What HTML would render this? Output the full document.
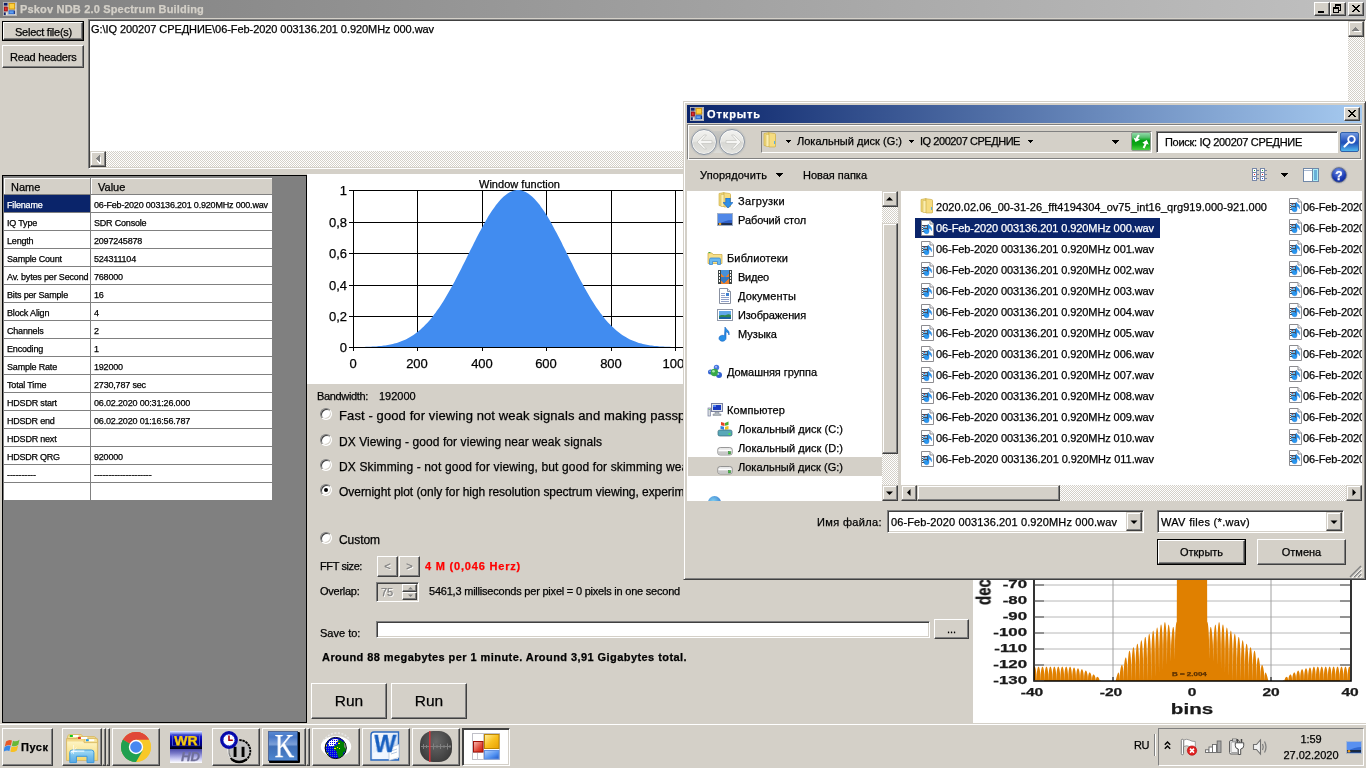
<!DOCTYPE html>
<html><head><meta charset="utf-8"><title>Pskov NDB</title>
<style>
*{box-sizing:border-box;margin:0;padding:0}
html,body{width:1366px;height:768px;overflow:hidden;background:#d4d0c8;font-family:"Liberation Sans",sans-serif;font-size:11px;color:#000}
.abs{position:absolute}
.t{position:absolute;white-space:nowrap;line-height:1;will-change:transform;-webkit-text-stroke:.25px}
.btn{position:absolute;background:#d4d0c8;border:1px solid;border-color:#fff #404040 #404040 #fff;box-shadow:inset -1px -1px 0 #808080,inset 1px 1px 0 #d4d0c8}
.sbtn{position:absolute;background:#d4d0c8;border:1px solid;border-color:#d4d0c8 #404040 #404040 #d4d0c8;box-shadow:inset -1px -1px 0 #808080,inset 1px 1px 0 #fff}
.sunk{position:absolute;background:#fff;border:1px solid;border-color:#808080 #fff #fff #808080;box-shadow:inset 1px 1px 0 #404040,inset -1px -1px 0 #d4d0c8}
.chk{background-color:#fff;background-image:linear-gradient(45deg,#d4d0c8 25%,transparent 25%,transparent 75%,#d4d0c8 75%),linear-gradient(45deg,#d4d0c8 25%,transparent 25%,transparent 75%,#d4d0c8 75%);background-size:2px 2px;background-position:0 0,1px 1px}
</style></head><body>

<div class="abs" style="left:0;top:0;width:1366px;height:18px;background:linear-gradient(90deg,#808080,#c0c0c0)"></div>
<div class="t" style="left:20px;top:3.69px;font-size:11px;font-weight:bold;color:#d4d0c8;letter-spacing:0.178px;">Pskov NDB 2.0 Spectrum Building</div>
<svg class="abs" style="left:3px;top:2px" width="14" height="14" viewBox="0 0 15 15">
<rect x=".5" y=".5" width="14" height="14" fill="none" stroke="#b8b8b8"/>
<rect x="1" y="1" width="4" height="3" fill="#10206a"/><rect x="1" y="11" width="2" height="3" fill="#10206a"/><rect x="3" y="11" width="2" height="3" fill="#e8e8e8"/><rect x="12" y="9" width="1" height="4" fill="#10206a"/>
<rect x="1" y="4" width="13" height="1" fill="#e0e0e0"/><rect x="5" y="1" width="1" height="13" fill="#e0e0e0"/><rect x="1" y="10" width="4" height="1" fill="#e0e0e0"/><rect x="13" y="1" width="1" height="13" fill="#d8d8d8"/><rect x="6" y="8" width="8" height="1" fill="#e0e0e0"/><rect x="6" y="13" width="8" height="1" fill="#d8d8d8"/>
<rect x="6.5" y="1.5" width="6" height="6" fill="#fcd040" stroke="#d89808"/>
<rect x="1.5" y="5.500" width="3" height="4" fill="#e03030" stroke="#a81010"/>
<rect x="6.5" y="9.500" width="5" height="3" fill="#60a0f0" stroke="#3070d8"/>
</svg>
<div class="btn" style="left:1314px;top:2px;width:16px;height:14px"></div>
<div class="btn" style="left:1330px;top:2px;width:16px;height:14px"></div>
<div class="btn" style="left:1348px;top:2px;width:16px;height:14px"></div>
<div class="abs" style="left:1318px;top:11px;width:6px;height:2px;background:#000"></div>
<svg class="abs" style="left:1330px;top:2px" width="16" height="14" viewBox="0 0 16 14" shape-rendering="crispEdges"><rect x="5" y="2" width="6" height="2" fill="#000"/><path d="M10.5 4v4.5h-1.5M5.5 4v1" fill="none" stroke="#000"/><rect x="3" y="5" width="6" height="2" fill="#000"/><path d="M3.5 7v3.5h5V7" fill="none" stroke="#000"/></svg>
<svg class="abs" style="left:1352px;top:5px" width="8" height="7" viewBox="0 0 8 7" shape-rendering="crispEdges"><path d="M0 0h2v1h1v1h2v-1h1v-1h2v1h-1v1h-1v1h-1v1h1v1h1v1h1v1h-2v-1h-1v-1h-2v1h-1v1h-2v-1h1v-1h1v-1h1v-1h-1v-1h-1v-1h-1z" fill="#000"/></svg>
<div class="abs" style="left:0;top:18px;width:1366px;height:1px;background:#d4d0c8"></div>
<div class="abs" style="left:2px;top:21px;width:82px;height:20px;border:1px solid #000"></div>
<div class="btn" style="left:3px;top:22px;width:80px;height:18px"></div>
<div class="t" style="left:14.5px;top:26.69px;font-size:11px;letter-spacing:-0.251px;">Select file(s)</div>
<div class="btn" style="left:2px;top:45px;width:82px;height:23px"></div>
<div class="t" style="left:9.5px;top:51.69px;font-size:11px;letter-spacing:-0.217px;">Read headers</div>
<div class="sunk" style="left:88px;top:19px;width:1278px;height:150px"></div>
<div class="t" style="left:91px;top:23.69px;font-size:11px;letter-spacing:-0.063px;">G:\IQ 200207 СРЕДНИЕ\06-Feb-2020 003136.201 0.920MHz 000.wav</div>
<div class="abs chk" style="left:90px;top:151px;width:1258px;height:16px"></div>
<div class="sbtn" style="left:90px;top:151px;width:16px;height:16px"></div>
<svg class="abs" style="left:95px;top:155px" width="6" height="9" viewBox="0 0 6 9" shape-rendering="crispEdges"><path d="M5 1h1v7h-1zM4 2h1v6h-1zM3 3h1v4h-1zM2 4h1v2h-1z" fill="#fff" transform="translate(0,1)"/><path d="M4 0h1v7h-1zM3 1h1v5h-1zM2 2h1v3h-1zM1 3h1v1h-1z" fill="#808080"/></svg>
<div class="abs chk" style="left:1348px;top:21px;width:16px;height:130px"></div>
<div class="sbtn" style="left:1348px;top:21px;width:16px;height:16px"></div>
<svg class="abs" style="left:1352px;top:27px" width="9" height="6" viewBox="0 0 9 6" shape-rendering="crispEdges"><path d="M1 4h7v1h-7z" fill="#fff" transform="translate(1,0)"/><path d="M3 0h1v1h-1zM2 1h3v1h-3zM1 2h5v1h-5zM0 3h7v1h-7z" fill="#808080"/></svg>
<div class="abs" style="left:2px;top:175px;width:305px;height:548px;background:#808080;border:1px solid #000"></div>
<div class="abs" style="left:4px;top:178px;width:87px;height:17px;background:#d4d0c8;border-right:1px solid #808080;border-bottom:1px solid #808080;box-shadow:inset 1px 1px 0 #fff"></div>
<div class="abs" style="left:91px;top:178px;width:182px;height:17px;background:#d4d0c8;border-right:1px solid #808080;border-bottom:1px solid #808080;box-shadow:inset 1px 1px 0 #fff"></div>
<div class="t" style="left:10.5px;top:181.69px;font-size:11px;">Name</div>
<div class="t" style="left:97.5px;top:181.69px;font-size:11px;">Value</div>
<div class="abs" style="left:4px;top:195px;width:86px;height:17px;background:#0a246a"></div>
<div class="abs" style="left:91px;top:195px;width:181px;height:17px;background:#fff"></div>
<div class="t" style="left:6.5px;top:201.08px;font-size:9px;color:#fff;letter-spacing:-0.185px;">Filename</div>
<div class="t" style="left:93.5px;top:201.08px;font-size:9px;letter-spacing:-0.186px;">06-Feb-2020 003136.201 0.920MHz 000.wav</div>
<div class="abs" style="left:4px;top:213px;width:86px;height:17px;background:#fff"></div>
<div class="abs" style="left:91px;top:213px;width:181px;height:17px;background:#fff"></div>
<div class="t" style="left:6.5px;top:219.08px;font-size:9px;letter-spacing:-0.179px;">IQ Type</div>
<div class="t" style="left:93.5px;top:219.08px;font-size:9px;letter-spacing:-0.198px;">SDR Console</div>
<div class="abs" style="left:4px;top:231px;width:86px;height:17px;background:#fff"></div>
<div class="abs" style="left:91px;top:231px;width:181px;height:17px;background:#fff"></div>
<div class="t" style="left:6.5px;top:237.08px;font-size:9px;letter-spacing:-0.184px;">Length</div>
<div class="t" style="left:93.5px;top:237.08px;font-size:9px;letter-spacing:-0.200px;">2097245878</div>
<div class="abs" style="left:4px;top:249px;width:86px;height:17px;background:#fff"></div>
<div class="abs" style="left:91px;top:249px;width:181px;height:17px;background:#fff"></div>
<div class="t" style="left:6.5px;top:255.08px;font-size:9px;letter-spacing:-0.190px;">Sample Count</div>
<div class="t" style="left:93.5px;top:255.08px;font-size:9px;letter-spacing:-0.194px;">524311104</div>
<div class="abs" style="left:4px;top:267px;width:86px;height:17px;background:#fff"></div>
<div class="abs" style="left:91px;top:267px;width:181px;height:17px;background:#fff"></div>
<div class="t" style="left:6.5px;top:273.08px;font-size:9px;letter-spacing:-0.169px;">Av. bytes per Second</div>
<div class="t" style="left:93.5px;top:273.08px;font-size:9px;letter-spacing:-0.200px;">768000</div>
<div class="abs" style="left:4px;top:285px;width:86px;height:17px;background:#fff"></div>
<div class="abs" style="left:91px;top:285px;width:181px;height:17px;background:#fff"></div>
<div class="t" style="left:6.5px;top:291.08px;font-size:9px;letter-spacing:-0.169px;">Bits per Sample</div>
<div class="t" style="left:93.5px;top:291.08px;font-size:9px;letter-spacing:-0.200px;">16</div>
<div class="abs" style="left:4px;top:303px;width:86px;height:17px;background:#fff"></div>
<div class="abs" style="left:91px;top:303px;width:181px;height:17px;background:#fff"></div>
<div class="t" style="left:6.5px;top:309.08px;font-size:9px;letter-spacing:-0.160px;">Block Align</div>
<div class="t" style="left:93.5px;top:309.08px;font-size:9px;">4</div>
<div class="abs" style="left:4px;top:321px;width:86px;height:17px;background:#fff"></div>
<div class="abs" style="left:91px;top:321px;width:181px;height:17px;background:#fff"></div>
<div class="t" style="left:6.5px;top:327.08px;font-size:9px;letter-spacing:-0.190px;">Channels</div>
<div class="t" style="left:93.5px;top:327.08px;font-size:9px;">2</div>
<div class="abs" style="left:4px;top:339px;width:86px;height:17px;background:#fff"></div>
<div class="abs" style="left:91px;top:339px;width:181px;height:17px;background:#fff"></div>
<div class="t" style="left:6.5px;top:345.08px;font-size:9px;letter-spacing:-0.188px;">Encoding</div>
<div class="t" style="left:93.5px;top:345.08px;font-size:9px;">1</div>
<div class="abs" style="left:4px;top:357px;width:86px;height:17px;background:#fff"></div>
<div class="abs" style="left:91px;top:357px;width:181px;height:17px;background:#fff"></div>
<div class="t" style="left:6.5px;top:363.08px;font-size:9px;letter-spacing:-0.189px;">Sample Rate</div>
<div class="t" style="left:93.5px;top:363.08px;font-size:9px;letter-spacing:-0.200px;">192000</div>
<div class="abs" style="left:4px;top:375px;width:86px;height:17px;background:#fff"></div>
<div class="abs" style="left:91px;top:375px;width:181px;height:17px;background:#fff"></div>
<div class="t" style="left:6.5px;top:381.08px;font-size:9px;letter-spacing:-0.164px;">Total Time</div>
<div class="t" style="left:93.5px;top:381.08px;font-size:9px;letter-spacing:-0.180px;">2730,787 sec</div>
<div class="abs" style="left:4px;top:393px;width:86px;height:17px;background:#fff"></div>
<div class="abs" style="left:91px;top:393px;width:181px;height:17px;background:#fff"></div>
<div class="t" style="left:6.5px;top:399.08px;font-size:9px;letter-spacing:-0.189px;">HDSDR start</div>
<div class="t" style="left:93.5px;top:399.08px;font-size:9px;letter-spacing:-0.174px;">06.02.2020 00:31:26.000</div>
<div class="abs" style="left:4px;top:411px;width:86px;height:17px;background:#fff"></div>
<div class="abs" style="left:91px;top:411px;width:181px;height:17px;background:#fff"></div>
<div class="t" style="left:6.5px;top:417.08px;font-size:9px;letter-spacing:-0.220px;">HDSDR end</div>
<div class="t" style="left:93.5px;top:417.08px;font-size:9px;letter-spacing:-0.174px;">06.02.2020 01:16:56.787</div>
<div class="abs" style="left:4px;top:429px;width:86px;height:17px;background:#fff"></div>
<div class="abs" style="left:91px;top:429px;width:181px;height:17px;background:#fff"></div>
<div class="t" style="left:6.5px;top:435.08px;font-size:9px;letter-spacing:-0.206px;">HDSDR next</div>
<div class="abs" style="left:4px;top:447px;width:86px;height:17px;background:#fff"></div>
<div class="abs" style="left:91px;top:447px;width:181px;height:17px;background:#fff"></div>
<div class="t" style="left:6.5px;top:453.08px;font-size:9px;letter-spacing:-0.244px;">HDSDR QRG</div>
<div class="t" style="left:93.5px;top:453.08px;font-size:9px;letter-spacing:-0.200px;">920000</div>
<div class="abs" style="left:4px;top:465px;width:86px;height:17px;background:#fff"></div>
<div class="abs" style="left:91px;top:465px;width:181px;height:17px;background:#fff"></div>
<div class="t" style="left:6.5px;top:471.08px;font-size:9px;letter-spacing:-0.120px;">----------</div>
<div class="t" style="left:93.5px;top:471.08px;font-size:9px;letter-spacing:-0.120px;">--------------------</div>
<div class="abs" style="left:4px;top:483px;width:86px;height:17px;background:#fff"></div>
<div class="abs" style="left:91px;top:483px;width:181px;height:17px;background:#fff"></div>
<div class="abs" style="left:307px;top:174px;width:400px;height:210px;background:#fff"></div>
<svg class="abs" style="left:307px;top:175px" width="400" height="208" viewBox="307 175 400 208"><path d="M349 347.5H700" stroke="#000" stroke-width="1" shape-rendering="crispEdges"/><path d="M349 316.5H700" stroke="#000" stroke-width="1" shape-rendering="crispEdges"/><path d="M349 285.5H700" stroke="#000" stroke-width="1" shape-rendering="crispEdges"/><path d="M349 253.5H700" stroke="#000" stroke-width="1" shape-rendering="crispEdges"/><path d="M349 222.5H700" stroke="#000" stroke-width="1" shape-rendering="crispEdges"/><path d="M349 190.5H700" stroke="#000" stroke-width="1" shape-rendering="crispEdges"/><path d="M353.5 190V351" stroke="#000" stroke-width="1" shape-rendering="crispEdges"/><path d="M417.5 190V351" stroke="#000" stroke-width="1" shape-rendering="crispEdges"/><path d="M482.5 190V351" stroke="#000" stroke-width="1" shape-rendering="crispEdges"/><path d="M546.5 190V351" stroke="#000" stroke-width="1" shape-rendering="crispEdges"/><path d="M611.5 190V351" stroke="#000" stroke-width="1" shape-rendering="crispEdges"/><path d="M675.5 190V351" stroke="#000" stroke-width="1" shape-rendering="crispEdges"/><polygon points="353,347.5 353.0,347.0 354.3,347.0 355.6,347.0 356.9,347.0 358.2,347.0 359.4,347.0 360.7,346.9 362.0,346.9 363.3,346.9 364.6,346.9 365.9,346.8 367.2,346.8 368.5,346.8 369.7,346.7 371.0,346.7 372.3,346.6 373.6,346.5 374.9,346.4 376.2,346.4 377.5,346.3 378.8,346.1 380.0,346.0 381.3,345.9 382.6,345.7 383.9,345.6 385.2,345.4 386.5,345.2 387.8,345.0 389.1,344.7 390.4,344.5 391.6,344.2 392.9,343.9 394.2,343.6 395.5,343.2 396.8,342.9 398.1,342.5 399.4,342.0 400.7,341.6 401.9,341.1 403.2,340.5 404.5,340.0 405.8,339.4 407.1,338.7 408.4,338.0 409.7,337.3 411.0,336.6 412.2,335.7 413.5,334.9 414.8,334.0 416.1,333.1 417.4,332.1 418.7,331.0 420.0,330.0 421.3,328.8 422.6,327.6 423.8,326.4 425.1,325.1 426.4,323.8 427.7,322.4 429.0,320.9 430.3,319.4 431.6,317.9 432.9,316.2 434.1,314.6 435.4,312.9 436.7,311.1 438.0,309.3 439.3,307.4 440.6,305.4 441.9,303.5 443.2,301.4 444.4,299.4 445.7,297.2 447.0,295.1 448.3,292.8 449.6,290.6 450.9,288.3 452.2,285.9 453.5,283.6 454.8,281.2 456.0,278.7 457.3,276.2 458.6,273.7 459.9,271.2 461.2,268.7 462.5,266.1 463.8,263.6 465.1,261.0 466.3,258.4 467.6,255.8 468.9,253.2 470.2,250.6 471.5,248.0 472.8,245.4 474.1,242.8 475.4,240.3 476.6,237.8 477.9,235.3 479.2,232.8 480.5,230.4 481.8,228.0 483.1,225.6 484.4,223.3 485.7,221.0 487.0,218.8 488.2,216.6 489.5,214.6 490.8,212.5 492.1,210.6 493.4,208.7 494.7,206.9 496.0,205.1 497.3,203.5 498.5,201.9 499.8,200.4 501.1,199.0 502.4,197.7 503.7,196.5 505.0,195.4 506.3,194.4 507.6,193.5 508.8,192.7 510.1,192.0 511.4,191.4 512.7,190.9 514.0,190.5 515.3,190.2 516.6,190.1 517.9,190.0 519.2,190.1 520.4,190.2 521.7,190.5 523.0,190.9 524.3,191.4 525.6,192.0 526.9,192.7 528.2,193.5 529.5,194.4 530.7,195.4 532.0,196.5 533.3,197.7 534.6,199.0 535.9,200.4 537.2,201.9 538.5,203.5 539.8,205.1 541.0,206.9 542.3,208.7 543.6,210.6 544.9,212.5 546.2,214.6 547.5,216.6 548.8,218.8 550.1,221.0 551.4,223.3 552.6,225.6 553.9,228.0 555.2,230.4 556.5,232.8 557.8,235.3 559.1,237.8 560.4,240.3 561.7,242.8 562.9,245.4 564.2,248.0 565.5,250.6 566.8,253.2 568.1,255.8 569.4,258.4 570.7,261.0 572.0,263.6 573.2,266.1 574.5,268.7 575.8,271.2 577.1,273.7 578.4,276.2 579.7,278.7 581.0,281.2 582.3,283.6 583.6,285.9 584.8,288.3 586.1,290.6 587.4,292.8 588.7,295.1 590.0,297.2 591.3,299.4 592.6,301.4 593.9,303.5 595.1,305.4 596.4,307.4 597.7,309.3 599.0,311.1 600.3,312.9 601.6,314.6 602.9,316.2 604.2,317.9 605.4,319.4 606.7,320.9 608.0,322.4 609.3,323.8 610.6,325.1 611.9,326.4 613.2,327.6 614.5,328.8 615.8,330.0 617.0,331.0 618.3,332.1 619.6,333.1 620.9,334.0 622.2,334.9 623.5,335.7 624.8,336.6 626.1,337.3 627.3,338.0 628.6,338.7 629.9,339.4 631.2,340.0 632.5,340.5 633.8,341.1 635.1,341.6 636.4,342.0 637.6,342.5 638.9,342.9 640.2,343.2 641.5,343.6 642.8,343.9 644.1,344.2 645.4,344.5 646.7,344.7 648.0,345.0 649.2,345.2 650.5,345.4 651.8,345.6 653.1,345.7 654.4,345.9 655.7,346.0 657.0,346.1 658.3,346.3 659.5,346.4 660.8,346.4 662.1,346.5 663.4,346.6 664.7,346.7 666.0,346.7 667.3,346.8 668.6,346.8 669.8,346.8 671.1,346.9 672.4,346.9 673.7,346.9 675.0,346.9 676.3,347.0 677.6,347.0 678.9,347.0 680.2,347.0 681.4,347.0 682.7,347.0 682.7,347.5" fill="#418cf0"/><path d="M349 347.5H700" stroke="#000" stroke-width="1" shape-rendering="crispEdges"/></svg>
<div class="t" style="left:479px;top:178.69px;font-size:11px;letter-spacing:0.020px;">Window function</div>
<div class="t" style="left:316px;top:341.00px;font-size:13px;width:31px;text-align:right;">0</div>
<div class="t" style="left:316px;top:310.00px;font-size:13px;width:31px;text-align:right;">0,2</div>
<div class="t" style="left:316px;top:279.00px;font-size:13px;width:31px;text-align:right;">0,4</div>
<div class="t" style="left:316px;top:247.00px;font-size:13px;width:31px;text-align:right;">0,6</div>
<div class="t" style="left:316px;top:216.00px;font-size:13px;width:31px;text-align:right;">0,8</div>
<div class="t" style="left:316px;top:184.00px;font-size:13px;width:31px;text-align:right;">1</div>
<div class="t" style="left:333px;top:357.00px;font-size:13px;width:40px;text-align:center;">0</div>
<div class="t" style="left:397px;top:357.00px;font-size:13px;width:40px;text-align:center;">200</div>
<div class="t" style="left:462px;top:357.00px;font-size:13px;width:40px;text-align:center;">400</div>
<div class="t" style="left:526px;top:357.00px;font-size:13px;width:40px;text-align:center;">600</div>
<div class="t" style="left:591px;top:357.00px;font-size:13px;width:40px;text-align:center;">800</div>
<div class="t" style="left:657px;top:357.00px;font-size:13px;width:40px;text-align:center;">1000</div>
<div class="t" style="left:317px;top:390.69px;font-size:11px;letter-spacing:-0.343px;">Bandwidth:</div>
<div class="t" style="left:379px;top:390.69px;font-size:11px;">192000</div>
<div class="abs" style="left:320px;top:408px;width:12px;height:12px;border-radius:50%;background:#fff;border:1px solid;border-color:#808080 #fff #fff #808080;box-shadow:inset 1px 1px 0 #404040,inset -1px -1px 0 #d4d0c8;transform:rotate(0deg)"></div>
<div class="t" style="left:339px;top:408.80px;font-size:13px;letter-spacing:0.107px;">Fast - good for viewing not weak signals and making passport</div>
<div class="abs" style="left:320px;top:434px;width:12px;height:12px;border-radius:50%;background:#fff;border:1px solid;border-color:#808080 #fff #fff #808080;box-shadow:inset 1px 1px 0 #404040,inset -1px -1px 0 #d4d0c8;transform:rotate(0deg)"></div>
<div class="t" style="left:339px;top:436.04px;font-size:12px;letter-spacing:0.080px;">DX Viewing - good for viewing near weak signals</div>
<div class="abs" style="left:320px;top:459px;width:12px;height:12px;border-radius:50%;background:#fff;border:1px solid;border-color:#808080 #fff #fff #808080;box-shadow:inset 1px 1px 0 #404040,inset -1px -1px 0 #d4d0c8;transform:rotate(0deg)"></div>
<div class="t" style="left:339px;top:461.04px;font-size:12px;letter-spacing:0.140px;">DX Skimming - not good for viewing, but good for skimming weak</div>
<div class="abs" style="left:320px;top:484px;width:12px;height:12px;border-radius:50%;background:#fff;border:1px solid;border-color:#808080 #fff #fff #808080;box-shadow:inset 1px 1px 0 #404040,inset -1px -1px 0 #d4d0c8;transform:rotate(0deg)"></div>
<div class="abs" style="left:324px;top:488px;width:4px;height:4px;border-radius:50%;background:#000"></div>
<div class="t" style="left:339px;top:486.04px;font-size:12px;letter-spacing:-0.042px;">Overnight plot (only for high resolution spectrum viewing, experimental</div>
<div class="abs" style="left:320px;top:532px;width:12px;height:12px;border-radius:50%;background:#fff;border:1px solid;border-color:#808080 #fff #fff #808080;box-shadow:inset 1px 1px 0 #404040,inset -1px -1px 0 #d4d0c8;transform:rotate(0deg)"></div>
<div class="t" style="left:339px;top:534.04px;font-size:12px;letter-spacing:-0.057px;">Custom</div>
<div class="t" style="left:320px;top:560.69px;font-size:11px;letter-spacing:-0.404px;">FFT size:</div>
<div class="btn" style="left:377px;top:556px;width:21px;height:21px"></div><div class="btn" style="left:399px;top:556px;width:21px;height:21px"></div>
<div class="t" style="left:377px;top:560.69px;font-size:11px;color:#808080;width:21px;text-align:center;text-shadow:1px 1px 0 #fff">&lt;</div>
<div class="t" style="left:399px;top:560.69px;font-size:11px;color:#808080;width:21px;text-align:center;text-shadow:1px 1px 0 #fff">&gt;</div>
<div class="t" style="left:425px;top:560.69px;font-size:11px;font-weight:bold;color:#f00;letter-spacing:0.803px;">4 M (0,046 Herz)</div>
<div class="t" style="left:320px;top:585.69px;font-size:11px;letter-spacing:-0.259px;">Overlap:</div>
<div class="sunk" style="left:376px;top:582px;width:43px;height:20px;background:#d4d0c8"></div>
<div class="t" style="left:381px;top:586.69px;font-size:11px;color:#808080;text-shadow:1px 1px 0 #fff">75</div>
<div class="btn" style="left:402px;top:584px;width:15px;height:8px"></div><div class="btn" style="left:402px;top:592px;width:15px;height:8px"></div>
<svg class="abs" style="left:401.5px;top:584px" width="16" height="16"><path d="M6 5.500h5l-2.500-2.500z M6 10.500h5l-2.500 2.500z" fill="#808080"/></svg>
<div class="t" style="left:429px;top:585.69px;font-size:11px;letter-spacing:-0.215px;">5461,3 milliseconds per pixel = 0 pixels in one second</div>
<div class="t" style="left:320px;top:627.69px;font-size:11px;">Save to:</div>
<div class="sunk" style="left:376px;top:621px;width:554px;height:17px"></div>
<div class="btn" style="left:934px;top:619px;width:35px;height:20px"></div>
<div class="t" style="left:934px;top:623.69px;font-size:11px;width:35px;text-align:center;">...</div>
<div class="t" style="left:322px;top:652.19px;font-size:11px;font-weight:bold;letter-spacing:0.432px;">Around 88 megabytes per 1 minute. Around 3,91 Gigabytes total.</div>
<div class="btn" style="left:311px;top:683px;width:76px;height:36px"></div>
<div class="t" style="left:311px;top:693.38px;font-size:15.5px;width:76px;text-align:center;">Run</div>
<div class="btn" style="left:391px;top:683px;width:76px;height:36px"></div>
<div class="t" style="left:391px;top:693.38px;font-size:15.5px;width:76px;text-align:center;">Run</div>
<div class="abs" style="left:973px;top:560px;width:393px;height:163px;background:#fff"></div>
<svg class="abs" style="left:973px;top:560px" width="393" height="163" viewBox="973 560 393 163"><path d="M1034 665.0H1350" stroke="#b8b8b8" stroke-width="1"/><path d="M1034 649.0H1350" stroke="#b8b8b8" stroke-width="1"/><path d="M1034 633.0H1350" stroke="#b8b8b8" stroke-width="1"/><path d="M1034 617.0H1350" stroke="#b8b8b8" stroke-width="1"/><path d="M1034 601.0H1350" stroke="#b8b8b8" stroke-width="1"/><path d="M1034 585.0H1350" stroke="#b8b8b8" stroke-width="1"/><path d="M1113.0 560V681" stroke="#a0a0a0" stroke-width="1"/><path d="M1192.0 560V681" stroke="#a0a0a0" stroke-width="1"/><path d="M1271.0 560V681" stroke="#a0a0a0" stroke-width="1"/><polygon points="1034,681 1034.00,667.2 1034.20,666.9 1034.39,666.7 1034.59,666.6 1034.79,666.7 1034.99,666.9 1035.18,667.2 1035.38,667.7 1035.58,668.4 1035.78,669.3 1035.97,670.5 1036.17,672.0 1036.37,674.2 1036.57,681.0 1036.77,674.2 1036.96,672.0 1037.16,670.5 1037.36,669.3 1037.56,668.4 1037.75,667.7 1037.95,667.2 1038.15,666.9 1038.35,666.7 1038.54,666.6 1038.74,666.7 1038.94,666.9 1039.13,667.2 1039.33,667.7 1039.53,668.4 1039.73,669.3 1039.92,670.5 1040.12,672.0 1040.32,674.2 1040.52,681.0 1040.71,674.2 1040.91,672.0 1041.11,670.5 1041.31,669.3 1041.50,668.4 1041.70,667.7 1041.90,667.2 1042.10,666.9 1042.30,666.7 1042.49,666.6 1042.69,666.7 1042.89,666.9 1043.09,667.2 1043.28,667.7 1043.48,668.4 1043.68,669.3 1043.88,670.5 1044.07,672.0 1044.27,674.2 1044.47,681.0 1044.66,674.2 1044.86,672.0 1045.06,670.5 1045.26,669.3 1045.45,668.4 1045.65,667.7 1045.85,667.2 1046.05,666.9 1046.25,666.7 1046.44,666.6 1046.64,666.7 1046.84,666.9 1047.04,667.2 1047.23,667.7 1047.43,668.4 1047.63,669.3 1047.83,670.5 1048.02,672.0 1048.22,674.2 1048.42,681.0 1048.62,674.2 1048.81,672.0 1049.01,670.5 1049.21,669.3 1049.40,668.4 1049.60,667.7 1049.80,667.2 1050.00,666.9 1050.19,666.7 1050.39,666.6 1050.59,666.7 1050.79,666.9 1050.98,667.2 1051.18,667.7 1051.38,668.4 1051.58,669.3 1051.78,670.5 1051.97,672.0 1052.17,674.2 1052.37,681.0 1052.57,674.2 1052.76,672.0 1052.96,670.5 1053.16,669.3 1053.36,668.4 1053.55,667.7 1053.75,667.2 1053.95,666.9 1054.14,666.7 1054.34,666.6 1054.54,666.7 1054.74,666.9 1054.93,667.2 1055.13,667.7 1055.33,668.4 1055.53,669.3 1055.72,670.5 1055.92,672.0 1056.12,674.2 1056.32,681.0 1056.52,674.2 1056.71,672.0 1056.91,670.5 1057.11,669.3 1057.31,668.4 1057.50,667.7 1057.70,667.2 1057.90,666.9 1058.10,666.7 1058.29,666.6 1058.49,666.7 1058.69,666.9 1058.88,667.2 1059.08,667.7 1059.28,668.4 1059.48,669.3 1059.67,670.5 1059.87,672.0 1060.07,674.2 1060.27,681.0 1060.46,674.2 1060.66,672.0 1060.86,670.5 1061.06,669.3 1061.26,668.4 1061.45,667.7 1061.65,667.2 1061.85,666.9 1062.05,666.7 1062.24,666.6 1062.44,666.7 1062.64,666.9 1062.84,667.2 1063.03,667.7 1063.23,668.4 1063.43,669.3 1063.62,670.5 1063.82,672.0 1064.02,674.2 1064.22,681.0 1064.41,674.2 1064.61,672.0 1064.81,670.5 1065.01,669.3 1065.20,668.4 1065.40,667.7 1065.60,667.2 1065.80,666.9 1065.99,666.7 1066.19,666.6 1066.39,666.7 1066.59,666.9 1066.79,667.2 1066.98,667.7 1067.18,668.4 1067.38,669.3 1067.58,670.5 1067.77,672.0 1067.97,674.2 1068.17,681.0 1068.37,674.2 1068.56,672.0 1068.76,670.5 1068.96,669.3 1069.15,668.4 1069.35,667.7 1069.55,667.2 1069.75,666.9 1069.94,666.7 1070.14,666.7 1070.34,666.8 1070.54,667.1 1070.73,667.5 1070.93,668.0 1071.13,668.7 1071.33,669.6 1071.53,670.8 1071.72,672.3 1071.92,674.5 1072.12,681.0 1072.32,674.5 1072.51,672.4 1072.71,670.9 1072.91,669.9 1073.11,669.1 1073.30,668.4 1073.50,668.0 1073.70,667.7 1073.89,667.5 1074.09,667.5 1074.29,667.6 1074.49,667.9 1074.68,668.2 1074.88,668.7 1075.08,669.4 1075.28,670.3 1075.47,671.4 1075.67,672.8 1075.87,674.9 1076.07,681.0 1076.27,675.0 1076.46,672.9 1076.66,671.6 1076.86,670.5 1077.06,669.8 1077.25,669.2 1077.45,668.8 1077.65,668.5 1077.85,668.3 1078.04,668.3 1078.24,668.4 1078.44,668.6 1078.63,669.0 1078.83,669.5 1079.03,670.1 1079.23,670.9 1079.42,672.0 1079.62,673.3 1079.82,675.3 1080.02,681.0 1080.21,675.4 1080.41,673.5 1080.61,672.2 1080.81,671.2 1081.01,670.5 1081.20,669.9 1081.40,669.5 1081.60,669.3 1081.80,669.2 1081.99,669.2 1082.19,669.3 1082.39,669.6 1082.59,669.9 1082.78,670.4 1082.98,671.0 1083.18,671.8 1083.38,672.8 1083.57,674.1 1083.77,675.9 1083.97,681.0 1084.16,676.0 1084.36,674.3 1084.56,673.1 1084.76,672.3 1084.95,671.7 1085.15,671.2 1085.35,670.9 1085.55,670.7 1085.74,670.6 1085.94,670.6 1086.14,670.7 1086.34,670.9 1086.54,671.3 1086.73,671.7 1086.93,672.3 1087.13,673.0 1087.33,673.9 1087.52,675.0 1087.72,676.7 1087.92,681.0 1088.12,676.8 1088.31,675.3 1088.51,674.4 1088.71,673.7 1088.90,673.2 1089.10,672.8 1089.30,672.6 1089.50,672.4 1089.69,672.4 1089.89,672.5 1090.09,672.6 1090.29,672.9 1090.48,673.2 1090.68,673.6 1090.88,674.1 1091.08,674.7 1091.28,675.5 1091.47,676.5 1091.67,677.8 1091.87,681.0 1092.07,677.9 1092.26,676.8 1092.46,676.0 1092.66,675.5 1092.86,675.1 1093.05,674.8 1093.25,674.6 1093.45,674.6 1093.64,674.6 1093.84,674.6 1094.04,674.8 1094.24,675.0 1094.43,675.3 1094.63,675.6 1094.83,676.0 1095.03,676.5 1095.22,677.1 1095.42,677.9 1095.62,679.0 1095.82,681.0 1096.02,679.1 1096.21,678.2 1096.41,677.7 1096.61,677.3 1096.81,677.1 1097.00,676.9 1097.20,676.8 1097.40,676.8 1097.60,676.9 1097.79,677.0 1097.99,677.1 1098.19,677.3 1098.38,677.5 1098.58,677.8 1098.78,678.1 1098.98,678.5 1099.17,679.0 1099.37,679.6 1099.57,680.4 1099.77,681.0 1099.96,680.8 1100.16,680.5 1100.36,680.4 1100.56,680.5 1100.76,680.6 1100.95,680.8 1101.15,681.0 1101.35,681.0 1101.55,681.0 1101.74,681.0 1101.94,681.0 1102.14,681.0 1102.34,681.0 1102.53,681.0 1102.73,681.0 1102.93,681.0 1103.12,681.0 1103.32,681.0 1103.52,681.0 1103.72,681.0 1103.91,681.0 1104.11,681.0 1104.31,681.0 1104.51,681.0 1104.70,681.0 1104.90,681.0 1105.10,681.0 1105.30,681.0 1105.49,681.0 1105.69,681.0 1105.89,681.0 1106.09,681.0 1106.29,681.0 1106.48,681.0 1106.68,681.0 1106.88,681.0 1107.08,681.0 1107.27,681.0 1107.47,681.0 1107.67,681.0 1107.87,681.0 1108.06,681.0 1108.26,681.0 1108.46,681.0 1108.65,681.0 1108.85,681.0 1109.05,681.0 1109.25,681.0 1109.44,681.0 1109.64,681.0 1109.84,681.0 1110.04,681.0 1110.23,681.0 1110.43,681.0 1110.63,681.0 1110.83,681.0 1111.03,681.0 1111.22,681.0 1111.42,681.0 1111.62,681.0 1111.82,681.0 1112.01,681.0 1112.21,681.0 1112.41,681.0 1112.61,681.0 1112.80,681.0 1113.00,681.0 1113.20,681.0 1113.39,681.0 1113.59,681.0 1113.79,681.0 1113.99,681.0 1114.18,681.0 1114.38,681.0 1114.58,681.0 1114.78,681.0 1114.97,681.0 1115.17,680.9 1115.37,681.0 1115.57,681.0 1115.77,680.4 1115.96,679.5 1116.16,678.7 1116.36,677.9 1116.56,677.1 1116.75,676.4 1116.95,675.7 1117.15,675.0 1117.35,674.4 1117.54,673.9 1117.74,673.4 1117.94,673.0 1118.13,672.7 1118.33,672.6 1118.53,672.6 1118.73,672.8 1118.92,673.3 1119.12,674.2 1119.32,675.8 1119.52,681.0 1119.71,675.4 1119.91,673.2 1120.11,671.5 1120.31,670.2 1120.51,669.0 1120.70,668.0 1120.90,667.1 1121.10,666.4 1121.30,665.8 1121.49,665.3 1121.69,665.0 1121.89,664.9 1122.09,664.9 1122.28,665.2 1122.48,665.6 1122.68,666.4 1122.88,667.5 1123.07,669.1 1123.27,671.8 1123.47,681.0 1123.66,671.4 1123.86,668.1 1124.06,665.7 1124.26,663.8 1124.45,662.2 1124.65,660.9 1124.85,659.8 1125.05,658.9 1125.24,658.2 1125.44,657.7 1125.64,657.4 1125.84,657.4 1126.04,657.6 1126.23,658.1 1126.43,658.9 1126.63,660.0 1126.83,661.7 1127.02,664.1 1127.22,667.8 1127.42,681.0 1127.62,667.4 1127.81,663.1 1128.01,660.0 1128.21,657.5 1128.40,655.5 1128.60,653.8 1128.80,652.5 1129.00,651.6 1129.19,651.0 1129.39,650.7 1129.59,650.7 1129.79,650.9 1129.98,651.5 1130.18,652.4 1130.38,653.6 1130.58,655.3 1130.78,657.5 1130.97,660.5 1131.17,665.1 1131.37,681.0 1131.57,664.9 1131.76,660.1 1131.96,656.7 1132.16,654.1 1132.36,652.0 1132.55,650.4 1132.75,649.1 1132.95,648.2 1133.14,647.6 1133.34,647.2 1133.54,647.2 1133.74,647.5 1133.93,648.1 1134.13,649.1 1134.33,650.5 1134.53,652.4 1134.72,654.9 1134.92,658.2 1135.12,663.3 1135.32,681.0 1135.52,663.1 1135.71,657.8 1135.91,654.1 1136.11,651.2 1136.31,649.0 1136.50,647.2 1136.70,645.8 1136.90,644.8 1137.10,644.1 1137.29,643.8 1137.49,643.8 1137.69,644.1 1137.88,644.8 1138.08,645.9 1138.28,647.4 1138.48,649.5 1138.67,652.2 1138.87,655.9 1139.07,661.5 1139.27,681.0 1139.46,661.3 1139.66,655.5 1139.86,651.4 1140.06,648.3 1140.26,645.9 1140.45,643.9 1140.65,642.5 1140.85,641.4 1141.05,640.6 1141.24,640.3 1141.44,640.3 1141.64,640.7 1141.84,641.5 1142.03,642.7 1142.23,644.3 1142.43,646.6 1142.62,649.6 1142.82,653.6 1143.02,659.7 1143.22,681.0 1143.41,659.5 1143.61,653.2 1143.81,648.8 1144.01,645.4 1144.20,642.8 1144.40,640.7 1144.60,639.1 1144.80,638.0 1144.99,637.2 1145.19,636.9 1145.39,636.9 1145.59,637.3 1145.79,638.2 1145.98,639.5 1146.18,641.4 1146.38,643.8 1146.58,647.1 1146.77,651.4 1146.97,658.0 1147.17,681.0 1147.37,657.8 1147.56,651.0 1147.76,646.4 1147.96,642.8 1148.15,640.0 1148.35,637.8 1148.55,636.1 1148.75,634.9 1148.94,634.1 1149.14,633.8 1149.34,633.8 1149.54,634.3 1149.74,635.2 1149.93,636.6 1150.13,638.5 1150.33,641.0 1150.53,644.3 1150.72,648.7 1150.92,655.3 1151.12,680.2 1151.32,654.9 1151.51,648.0 1151.71,643.3 1151.91,639.7 1152.11,636.9 1152.30,634.7 1152.50,633.0 1152.70,631.8 1152.89,631.0 1153.09,630.6 1153.29,630.7 1153.49,631.2 1153.68,632.1 1153.88,633.4 1154.08,635.3 1154.28,637.8 1154.47,641.0 1154.67,645.4 1154.87,651.9 1155.07,676.4 1155.27,651.5 1155.46,644.7 1155.66,640.0 1155.86,636.5 1156.06,633.7 1156.25,631.5 1156.45,629.9 1156.65,628.7 1156.85,627.9 1157.04,627.5 1157.24,627.6 1157.44,628.0 1157.63,628.9 1157.83,630.3 1158.03,632.1 1158.23,634.6 1158.42,637.8 1158.62,642.1 1158.82,648.5 1159.02,672.7 1159.21,648.1 1159.41,641.4 1159.61,636.8 1159.81,633.3 1160.01,630.5 1160.20,628.4 1160.40,626.7 1160.60,625.6 1160.80,624.8 1160.99,624.4 1161.19,624.5 1161.39,624.9 1161.59,625.8 1161.78,627.1 1161.98,628.9 1162.18,631.4 1162.38,634.5 1162.57,638.8 1162.77,645.1 1162.97,669.0 1163.16,644.7 1163.36,638.1 1163.56,633.5 1163.76,630.1 1163.95,627.4 1164.15,625.2 1164.35,623.6 1164.55,622.7 1164.74,622.2 1164.94,622.0 1165.14,622.3 1165.34,623.0 1165.54,624.0 1165.73,625.5 1165.93,627.4 1166.13,629.9 1166.33,633.0 1166.52,637.1 1166.72,643.1 1166.92,665.2 1167.12,643.0 1167.31,637.1 1167.51,633.1 1167.71,630.2 1167.90,627.9 1168.10,626.2 1168.30,625.0 1168.50,624.6 1168.69,624.7 1168.89,625.0 1169.09,625.8 1169.29,626.8 1169.49,628.1 1169.68,629.8 1169.88,631.8 1170.08,634.1 1170.28,636.9 1170.47,640.4 1170.67,645.1 1170.87,661.5 1171.07,645.5 1171.26,641.6 1171.46,639.1 1171.66,636.5 1171.86,634.3 1172.05,632.4 1172.25,630.8 1172.45,629.5 1172.64,628.4 1172.84,627.6 1173.04,627.1 1173.24,626.9 1173.43,627.0 1173.63,627.5 1173.83,628.4 1174.03,629.8 1174.22,631.9 1174.42,634.9 1174.62,639.7 1174.82,659.3 1175.02,639.7 1175.21,634.4 1175.41,630.8 1175.61,628.1 1175.81,626.0 1176.00,624.5 1176.20,623.3 1176.40,622.4 1176.60,622.0 1176.79,621.8 1176.99,537.0 1177.19,537.0 1177.38,537.0 1177.58,537.0 1177.78,537.0 1177.98,537.0 1178.17,537.0 1178.37,537.0 1178.57,537.0 1178.77,537.0 1178.96,537.0 1179.16,537.0 1179.36,537.0 1179.56,537.0 1179.76,537.0 1179.95,537.0 1180.15,537.0 1180.35,537.0 1180.55,537.0 1180.74,537.0 1180.94,537.0 1181.14,537.0 1181.34,537.0 1181.53,537.0 1181.73,537.0 1181.93,537.0 1182.12,537.0 1182.32,537.0 1182.52,537.0 1182.72,537.0 1182.91,537.0 1183.11,537.0 1183.31,537.0 1183.51,537.0 1183.70,537.0 1183.90,537.0 1184.10,537.0 1184.30,537.0 1184.49,537.0 1184.69,537.0 1184.89,537.0 1185.09,537.0 1185.29,537.0 1185.48,537.0 1185.68,537.0 1185.88,537.0 1186.08,537.0 1186.27,537.0 1186.47,537.0 1186.67,537.0 1186.87,537.0 1187.06,537.0 1187.26,537.0 1187.46,537.0 1187.65,537.0 1187.85,537.0 1188.05,537.0 1188.25,537.0 1188.44,537.0 1188.64,537.0 1188.84,537.0 1189.04,537.0 1189.24,537.0 1189.43,537.0 1189.63,537.0 1189.83,537.0 1190.03,537.0 1190.22,537.0 1190.42,537.0 1190.62,537.0 1190.82,537.0 1191.01,537.0 1191.21,537.0 1191.41,537.0 1191.61,537.0 1191.80,537.0 1192.00,537.0 1192.20,537.0 1192.39,537.0 1192.59,537.0 1192.79,537.0 1192.99,537.0 1193.18,537.0 1193.38,537.0 1193.58,537.0 1193.78,537.0 1193.97,537.0 1194.17,537.0 1194.37,537.0 1194.57,537.0 1194.77,537.0 1194.96,537.0 1195.16,537.0 1195.36,537.0 1195.56,537.0 1195.75,537.0 1195.95,537.0 1196.15,537.0 1196.35,537.0 1196.54,537.0 1196.74,537.0 1196.94,537.0 1197.13,537.0 1197.33,537.0 1197.53,537.0 1197.73,537.0 1197.92,537.0 1198.12,537.0 1198.32,537.0 1198.52,537.0 1198.71,537.0 1198.91,537.0 1199.11,537.0 1199.31,537.0 1199.51,537.0 1199.70,537.0 1199.90,537.0 1200.10,537.0 1200.30,537.0 1200.49,537.0 1200.69,537.0 1200.89,537.0 1201.09,537.0 1201.28,537.0 1201.48,537.0 1201.68,537.0 1201.88,537.0 1202.07,537.0 1202.27,537.0 1202.47,537.0 1202.66,537.0 1202.86,537.0 1203.06,537.0 1203.26,537.0 1203.45,537.0 1203.65,537.0 1203.85,537.0 1204.05,537.0 1204.24,537.0 1204.44,537.0 1204.64,537.0 1204.84,537.0 1205.04,537.0 1205.23,537.0 1205.43,537.0 1205.63,537.0 1205.83,537.0 1206.02,537.0 1206.22,537.0 1206.42,537.0 1206.62,537.0 1206.81,537.0 1207.01,537.0 1207.21,621.8 1207.40,622.0 1207.60,622.4 1207.80,623.3 1208.00,624.5 1208.19,626.0 1208.39,628.1 1208.59,630.8 1208.79,634.4 1208.99,639.7 1209.18,659.3 1209.38,639.7 1209.58,634.9 1209.78,631.9 1209.97,629.8 1210.17,628.4 1210.37,627.5 1210.57,627.0 1210.76,626.9 1210.96,627.1 1211.16,627.6 1211.36,628.4 1211.55,629.5 1211.75,630.8 1211.95,632.4 1212.14,634.3 1212.34,636.5 1212.54,639.1 1212.74,641.6 1212.93,645.5 1213.13,661.5 1213.33,645.1 1213.53,640.4 1213.72,636.9 1213.92,634.1 1214.12,631.8 1214.32,629.8 1214.52,628.1 1214.71,626.8 1214.91,625.8 1215.11,625.0 1215.31,624.7 1215.50,624.6 1215.70,625.0 1215.90,626.2 1216.10,627.9 1216.29,630.2 1216.49,633.1 1216.69,637.1 1216.88,643.0 1217.08,665.2 1217.28,643.1 1217.48,637.1 1217.67,633.0 1217.87,629.9 1218.07,627.4 1218.27,625.5 1218.46,624.0 1218.66,623.0 1218.86,622.3 1219.06,622.0 1219.26,622.2 1219.45,622.7 1219.65,623.6 1219.85,625.2 1220.05,627.4 1220.24,630.1 1220.44,633.5 1220.64,638.1 1220.84,644.7 1221.03,669.0 1221.23,645.1 1221.43,638.8 1221.62,634.5 1221.82,631.4 1222.02,628.9 1222.22,627.1 1222.41,625.8 1222.61,624.9 1222.81,624.5 1223.01,624.4 1223.20,624.8 1223.40,625.6 1223.60,626.7 1223.80,628.4 1223.99,630.5 1224.19,633.3 1224.39,636.8 1224.59,641.4 1224.79,648.1 1224.98,672.7 1225.18,648.5 1225.38,642.1 1225.58,637.8 1225.77,634.6 1225.97,632.1 1226.17,630.3 1226.37,628.9 1226.56,628.0 1226.76,627.6 1226.96,627.5 1227.15,627.9 1227.35,628.7 1227.55,629.9 1227.75,631.5 1227.94,633.7 1228.14,636.5 1228.34,640.0 1228.54,644.7 1228.74,651.5 1228.93,676.4 1229.13,651.9 1229.33,645.4 1229.53,641.0 1229.72,637.8 1229.92,635.3 1230.12,633.4 1230.32,632.1 1230.51,631.2 1230.71,630.7 1230.91,630.6 1231.11,631.0 1231.30,631.8 1231.50,633.0 1231.70,634.7 1231.89,636.9 1232.09,639.7 1232.29,643.3 1232.49,648.0 1232.68,654.9 1232.88,680.2 1233.08,655.3 1233.28,648.7 1233.47,644.3 1233.67,641.0 1233.87,638.5 1234.07,636.6 1234.27,635.2 1234.46,634.3 1234.66,633.8 1234.86,633.8 1235.06,634.1 1235.25,634.9 1235.45,636.1 1235.65,637.8 1235.85,640.0 1236.04,642.8 1236.24,646.4 1236.44,651.0 1236.63,657.8 1236.83,681.0 1237.03,658.0 1237.23,651.4 1237.42,647.1 1237.62,643.8 1237.82,641.4 1238.02,639.5 1238.21,638.2 1238.41,637.3 1238.61,636.9 1238.81,636.9 1239.01,637.2 1239.20,638.0 1239.40,639.1 1239.60,640.7 1239.80,642.8 1239.99,645.4 1240.19,648.8 1240.39,653.2 1240.59,659.5 1240.78,681.0 1240.98,659.7 1241.18,653.6 1241.38,649.6 1241.57,646.6 1241.77,644.3 1241.97,642.7 1242.16,641.5 1242.36,640.7 1242.56,640.3 1242.76,640.3 1242.95,640.6 1243.15,641.4 1243.35,642.5 1243.55,643.9 1243.75,645.9 1243.94,648.3 1244.14,651.4 1244.34,655.5 1244.54,661.3 1244.73,681.0 1244.93,661.5 1245.13,655.9 1245.33,652.2 1245.52,649.5 1245.72,647.4 1245.92,645.9 1246.12,644.8 1246.31,644.1 1246.51,643.8 1246.71,643.8 1246.90,644.1 1247.10,644.8 1247.30,645.8 1247.50,647.2 1247.69,649.0 1247.89,651.2 1248.09,654.1 1248.29,657.8 1248.49,663.1 1248.68,681.0 1248.88,663.3 1249.08,658.2 1249.28,654.9 1249.47,652.4 1249.67,650.5 1249.87,649.1 1250.07,648.1 1250.26,647.5 1250.46,647.2 1250.66,647.2 1250.86,647.6 1251.05,648.2 1251.25,649.1 1251.45,650.4 1251.64,652.0 1251.84,654.1 1252.04,656.7 1252.24,660.1 1252.43,664.9 1252.63,681.0 1252.83,665.1 1253.03,660.5 1253.22,657.5 1253.42,655.3 1253.62,653.6 1253.82,652.4 1254.02,651.5 1254.21,650.9 1254.41,650.7 1254.61,650.7 1254.81,651.0 1255.00,651.6 1255.20,652.5 1255.40,653.8 1255.60,655.5 1255.79,657.5 1255.99,660.0 1256.19,663.1 1256.38,667.4 1256.58,681.0 1256.78,667.8 1256.98,664.1 1257.17,661.7 1257.37,660.0 1257.57,658.9 1257.77,658.1 1257.96,657.6 1258.16,657.4 1258.36,657.4 1258.56,657.7 1258.76,658.2 1258.95,658.9 1259.15,659.8 1259.35,660.9 1259.55,662.2 1259.74,663.8 1259.94,665.7 1260.14,668.1 1260.34,671.4 1260.53,681.0 1260.73,671.8 1260.93,669.1 1261.12,667.5 1261.32,666.4 1261.52,665.6 1261.72,665.2 1261.91,664.9 1262.11,664.9 1262.31,665.0 1262.51,665.3 1262.70,665.8 1262.90,666.4 1263.10,667.1 1263.30,668.0 1263.50,669.0 1263.69,670.2 1263.89,671.5 1264.09,673.2 1264.29,675.4 1264.48,681.0 1264.68,675.8 1264.88,674.2 1265.08,673.3 1265.27,672.8 1265.47,672.6 1265.67,672.6 1265.87,672.7 1266.06,673.0 1266.26,673.4 1266.46,673.9 1266.65,674.4 1266.85,675.0 1267.05,675.7 1267.25,676.4 1267.44,677.1 1267.64,677.9 1267.84,678.7 1268.04,679.5 1268.24,680.4 1268.43,681.0 1268.63,681.0 1268.83,680.9 1269.03,681.0 1269.22,681.0 1269.42,681.0 1269.62,681.0 1269.82,681.0 1270.01,681.0 1270.21,681.0 1270.41,681.0 1270.61,681.0 1270.80,681.0 1271.00,681.0 1271.20,681.0 1271.39,681.0 1271.59,681.0 1271.79,681.0 1271.99,681.0 1272.18,681.0 1272.38,681.0 1272.58,681.0 1272.78,681.0 1272.97,681.0 1273.17,681.0 1273.37,681.0 1273.57,681.0 1273.77,681.0 1273.96,681.0 1274.16,681.0 1274.36,681.0 1274.56,681.0 1274.75,681.0 1274.95,681.0 1275.15,681.0 1275.35,681.0 1275.54,681.0 1275.74,681.0 1275.94,681.0 1276.13,681.0 1276.33,681.0 1276.53,681.0 1276.73,681.0 1276.92,681.0 1277.12,681.0 1277.32,681.0 1277.52,681.0 1277.71,681.0 1277.91,681.0 1278.11,681.0 1278.31,681.0 1278.51,681.0 1278.70,681.0 1278.90,681.0 1279.10,681.0 1279.30,681.0 1279.49,681.0 1279.69,681.0 1279.89,681.0 1280.09,681.0 1280.28,681.0 1280.48,681.0 1280.68,681.0 1280.88,681.0 1281.07,681.0 1281.27,681.0 1281.47,681.0 1281.66,681.0 1281.86,681.0 1282.06,681.0 1282.26,681.0 1282.45,681.0 1282.65,681.0 1282.85,681.0 1283.05,680.8 1283.25,680.6 1283.44,680.5 1283.64,680.4 1283.84,680.5 1284.04,680.8 1284.23,681.0 1284.43,680.4 1284.63,679.6 1284.83,679.0 1285.02,678.5 1285.22,678.1 1285.42,677.8 1285.62,677.5 1285.81,677.3 1286.01,677.1 1286.21,677.0 1286.40,676.9 1286.60,676.8 1286.80,676.8 1287.00,676.9 1287.19,677.1 1287.39,677.3 1287.59,677.7 1287.79,678.2 1287.98,679.1 1288.18,681.0 1288.38,679.0 1288.58,677.9 1288.78,677.1 1288.97,676.5 1289.17,676.0 1289.37,675.6 1289.57,675.3 1289.76,675.0 1289.96,674.8 1290.16,674.6 1290.36,674.6 1290.55,674.6 1290.75,674.6 1290.95,674.8 1291.14,675.1 1291.34,675.5 1291.54,676.0 1291.74,676.8 1291.93,677.9 1292.13,681.0 1292.33,677.8 1292.53,676.5 1292.72,675.5 1292.92,674.7 1293.12,674.1 1293.32,673.6 1293.51,673.2 1293.71,672.9 1293.91,672.6 1294.11,672.5 1294.31,672.4 1294.50,672.4 1294.70,672.6 1294.90,672.8 1295.10,673.2 1295.29,673.7 1295.49,674.4 1295.69,675.3 1295.88,676.8 1296.08,681.0 1296.28,676.7 1296.48,675.0 1296.67,673.9 1296.87,673.0 1297.07,672.3 1297.27,671.7 1297.47,671.3 1297.66,670.9 1297.86,670.7 1298.06,670.6 1298.26,670.6 1298.45,670.7 1298.65,670.9 1298.85,671.2 1299.05,671.7 1299.24,672.3 1299.44,673.1 1299.64,674.3 1299.84,676.0 1300.03,681.0 1300.23,675.9 1300.43,674.1 1300.62,672.8 1300.82,671.8 1301.02,671.0 1301.22,670.4 1301.41,669.9 1301.61,669.6 1301.81,669.3 1302.01,669.2 1302.20,669.2 1302.40,669.3 1302.60,669.5 1302.80,669.9 1302.99,670.5 1303.19,671.2 1303.39,672.2 1303.59,673.5 1303.78,675.4 1303.98,681.0 1304.18,675.3 1304.38,673.3 1304.58,672.0 1304.77,670.9 1304.97,670.1 1305.17,669.5 1305.37,669.0 1305.56,668.6 1305.76,668.4 1305.96,668.3 1306.15,668.3 1306.35,668.5 1306.55,668.8 1306.75,669.2 1306.95,669.8 1307.14,670.5 1307.34,671.6 1307.54,672.9 1307.74,675.0 1307.93,681.0 1308.13,674.9 1308.33,672.8 1308.53,671.4 1308.72,670.3 1308.92,669.4 1309.12,668.7 1309.32,668.2 1309.51,667.9 1309.71,667.6 1309.91,667.5 1310.11,667.5 1310.30,667.7 1310.50,668.0 1310.70,668.4 1310.89,669.1 1311.09,669.9 1311.29,670.9 1311.49,672.4 1311.68,674.5 1311.88,681.0 1312.08,674.5 1312.28,672.3 1312.47,670.8 1312.67,669.6 1312.87,668.7 1313.07,668.0 1313.26,667.5 1313.46,667.1 1313.66,666.8 1313.86,666.7 1314.06,666.7 1314.25,666.9 1314.45,667.2 1314.65,667.7 1314.85,668.4 1315.04,669.3 1315.24,670.5 1315.44,672.0 1315.63,674.2 1315.83,681.0 1316.03,674.2 1316.23,672.0 1316.42,670.5 1316.62,669.3 1316.82,668.4 1317.02,667.7 1317.22,667.2 1317.41,666.9 1317.61,666.7 1317.81,666.6 1318.01,666.7 1318.20,666.9 1318.40,667.2 1318.60,667.7 1318.80,668.4 1318.99,669.3 1319.19,670.5 1319.39,672.0 1319.59,674.2 1319.78,681.0 1319.98,674.2 1320.18,672.0 1320.38,670.5 1320.57,669.3 1320.77,668.4 1320.97,667.7 1321.16,667.2 1321.36,666.9 1321.56,666.7 1321.76,666.6 1321.95,666.7 1322.15,666.9 1322.35,667.2 1322.55,667.7 1322.74,668.4 1322.94,669.3 1323.14,670.5 1323.34,672.0 1323.53,674.2 1323.73,681.0 1323.93,674.2 1324.13,672.0 1324.33,670.5 1324.52,669.3 1324.72,668.4 1324.92,667.7 1325.12,667.2 1325.31,666.9 1325.51,666.7 1325.71,666.6 1325.90,666.7 1326.10,666.9 1326.30,667.2 1326.50,667.7 1326.70,668.4 1326.89,669.3 1327.09,670.5 1327.29,672.0 1327.49,674.2 1327.68,681.0 1327.88,674.2 1328.08,672.0 1328.28,670.5 1328.47,669.3 1328.67,668.4 1328.87,667.7 1329.07,667.2 1329.26,666.9 1329.46,666.7 1329.66,666.6 1329.86,666.7 1330.05,666.9 1330.25,667.2 1330.45,667.7 1330.64,668.4 1330.84,669.3 1331.04,670.5 1331.24,672.0 1331.43,674.2 1331.63,681.0 1331.83,674.2 1332.03,672.0 1332.22,670.5 1332.42,669.3 1332.62,668.4 1332.82,667.7 1333.01,667.2 1333.21,666.9 1333.41,666.7 1333.61,666.6 1333.81,666.7 1334.00,666.9 1334.20,667.2 1334.40,667.7 1334.60,668.4 1334.79,669.3 1334.99,670.5 1335.19,672.0 1335.38,674.2 1335.58,681.0 1335.78,674.2 1335.98,672.0 1336.17,670.5 1336.37,669.3 1336.57,668.4 1336.77,667.7 1336.97,667.2 1337.16,666.9 1337.36,666.7 1337.56,666.6 1337.76,666.7 1337.95,666.9 1338.15,667.2 1338.35,667.7 1338.55,668.4 1338.74,669.3 1338.94,670.5 1339.14,672.0 1339.34,674.2 1339.53,681.0 1339.73,674.2 1339.93,672.0 1340.12,670.5 1340.32,669.3 1340.52,668.4 1340.72,667.7 1340.91,667.2 1341.11,666.9 1341.31,666.7 1341.51,666.6 1341.70,666.7 1341.90,666.9 1342.10,667.2 1342.30,667.7 1342.49,668.4 1342.69,669.3 1342.89,670.5 1343.09,672.0 1343.29,674.2 1343.48,681.0 1343.68,674.2 1343.88,672.0 1344.08,670.5 1344.27,669.3 1344.47,668.4 1344.67,667.7 1344.87,667.2 1345.06,666.9 1345.26,666.7 1345.46,666.6 1345.65,666.7 1345.85,666.9 1346.05,667.2 1346.25,667.7 1346.45,668.4 1346.64,669.3 1346.84,670.5 1347.04,672.0 1347.24,674.2 1347.43,681.0 1347.63,674.2 1347.83,672.0 1348.03,670.5 1348.22,669.3 1348.42,668.4 1348.62,667.7 1348.82,667.2 1349.01,666.9 1349.21,666.7 1349.41,666.6 1349.61,666.7 1349.80,666.9 1350.00,667.2 1350,681" fill="#e08000"/><path d="M1034 560V681H1351V560" fill="none" stroke="#000" stroke-width="1.6"/><path d="M1034 681.0h10M1350 681.0h-10" stroke="#484848" stroke-width="1"/><path d="M1034 665.0h10M1350 665.0h-10" stroke="#484848" stroke-width="1"/><path d="M1034 649.0h10M1350 649.0h-10" stroke="#484848" stroke-width="1"/><path d="M1034 633.0h10M1350 633.0h-10" stroke="#484848" stroke-width="1"/><path d="M1034 617.0h10M1350 617.0h-10" stroke="#484848" stroke-width="1"/><path d="M1034 601.0h10M1350 601.0h-10" stroke="#484848" stroke-width="1"/><path d="M1034 585.0h10M1350 585.0h-10" stroke="#484848" stroke-width="1"/><path d="M1113.0 681v-4" stroke="#000" stroke-width="1"/><path d="M1271.0 681v-4" stroke="#000" stroke-width="1"/></svg>
<div class="t" style="left:980px;top:675.74px;font-size:10px;font-weight:bold;color:#1a1a1a;width:47px;text-align:right;transform:scaleX(1.68);transform-origin:100% 50%;">-130</div>
<div class="t" style="left:980px;top:659.74px;font-size:10px;font-weight:bold;color:#1a1a1a;width:47px;text-align:right;transform:scaleX(1.68);transform-origin:100% 50%;">-120</div>
<div class="t" style="left:980px;top:643.74px;font-size:10px;font-weight:bold;color:#1a1a1a;width:47px;text-align:right;transform:scaleX(1.68);transform-origin:100% 50%;">-110</div>
<div class="t" style="left:980px;top:627.74px;font-size:10px;font-weight:bold;color:#1a1a1a;width:47px;text-align:right;transform:scaleX(1.68);transform-origin:100% 50%;">-100</div>
<div class="t" style="left:980px;top:611.74px;font-size:10px;font-weight:bold;color:#1a1a1a;width:47px;text-align:right;transform:scaleX(1.68);transform-origin:100% 50%;">-90</div>
<div class="t" style="left:980px;top:595.74px;font-size:10px;font-weight:bold;color:#1a1a1a;width:47px;text-align:right;transform:scaleX(1.68);transform-origin:100% 50%;">-80</div>
<div class="t" style="left:980px;top:579.74px;font-size:10px;font-weight:bold;color:#1a1a1a;width:47px;text-align:right;transform:scaleX(1.68);transform-origin:100% 50%;">-70</div>
<div class="t" style="left:1011.5px;top:688.03px;font-size:10px;font-weight:bold;color:#1a1a1a;width:40px;text-align:center;transform:scaleX(1.55);">-40</div>
<div class="t" style="left:1090.5px;top:688.03px;font-size:10px;font-weight:bold;color:#1a1a1a;width:40px;text-align:center;transform:scaleX(1.55);">-20</div>
<div class="t" style="left:1172.0px;top:688.03px;font-size:10px;font-weight:bold;color:#1a1a1a;width:40px;text-align:center;transform:scaleX(1.55);">0</div>
<div class="t" style="left:1251.0px;top:688.03px;font-size:10px;font-weight:bold;color:#1a1a1a;width:40px;text-align:center;transform:scaleX(1.55);">20</div>
<div class="t" style="left:1330.0px;top:688.03px;font-size:10px;font-weight:bold;color:#1a1a1a;width:40px;text-align:center;transform:scaleX(1.55);">40</div>
<div class="t" style="left:1152px;top:701.73px;font-size:14.5px;font-weight:bold;color:#1a1a1a;width:80px;text-align:center;transform:scaleX(1.42);">bins</div>
<div class="t" style="left:1172px;top:672.34px;font-size:5.5px;font-weight:bold;color:#5a3000;transform:scaleX(1.45);transform-origin:0 50%;">B = 2.004</div>
<div class="t" style="left:971.7px;top:605px;font-size:15px;font-weight:bold;color:#1a1a1a;transform-origin:0 0;transform:rotate(-90deg) scaleY(1.4)">dec</div>
<div class="abs" style="left:683px;top:101px;width:683px;height:479px;background:#d4d0c8;border:1px solid;border-color:#d4d0c8 #404040 #404040 #d4d0c8;box-shadow:inset 1px 1px 0 #fff,inset -1px -1px 0 #808080"></div>
<div class="abs" style="left:687px;top:105px;width:675px;height:18px;background:linear-gradient(90deg,#0a246a,#a6caf0)"></div>
<svg class="abs" style="left:690px;top:107px" width="14" height="14" viewBox="0 0 15 15">
<rect x=".5" y=".5" width="14" height="14" fill="none" stroke="#b8b8b8"/>
<rect x="1" y="1" width="4" height="3" fill="#10206a"/><rect x="1" y="11" width="2" height="3" fill="#10206a"/><rect x="3" y="11" width="2" height="3" fill="#e8e8e8"/><rect x="12" y="9" width="1" height="4" fill="#10206a"/>
<rect x="1" y="4" width="13" height="1" fill="#e0e0e0"/><rect x="5" y="1" width="1" height="13" fill="#e0e0e0"/><rect x="1" y="10" width="4" height="1" fill="#e0e0e0"/><rect x="13" y="1" width="1" height="13" fill="#d8d8d8"/><rect x="6" y="8" width="8" height="1" fill="#e0e0e0"/><rect x="6" y="13" width="8" height="1" fill="#d8d8d8"/>
<rect x="6.5" y="1.5" width="6" height="6" fill="#fcd040" stroke="#d89808"/>
<rect x="1.5" y="5.500" width="3" height="4" fill="#e03030" stroke="#a81010"/>
<rect x="6.5" y="9.500" width="5" height="3" fill="#60a0f0" stroke="#3070d8"/>
</svg>
<div class="t" style="left:707px;top:109.19px;font-size:11px;font-weight:bold;color:#fff;letter-spacing:0.898px;">Открыть</div>
<div class="btn" style="left:1344px;top:107px;width:16px;height:14px"></div>
<svg class="abs" style="left:1348px;top:110px" width="8" height="7" viewBox="0 0 8 7" shape-rendering="crispEdges"><path d="M0 0h2v1h1v1h2v-1h1v-1h2v1h-1v1h-1v1h-1v1h1v1h1v1h1v1h-2v-1h-1v-1h-2v1h-1v1h-2v-1h1v-1h1v-1h1v-1h-1v-1h-1v-1h-1z" fill="#000"/></svg>
<div class="abs" style="left:687px;top:124px;width:675px;height:36px;border:1px solid;border-color:#808080 #fff #fff #808080;box-shadow:inset 1px 1px 0 #fff,inset -1px -1px 0 #808080;background:#d4d0c8"></div>
<div class="abs" style="left:703px;top:131px;width:30px;height:22px;background:linear-gradient(#c8c8c4,#b8b8b4 45%,#d0d0cc 55%,#dcdcd8)"></div>
<div class="abs" style="left:691px;top:129px;width:26px;height:26px;border-radius:50%;background:linear-gradient(#f2f2f0 0,#e6e6e2 47%,#d8d8d4 53%,#e4e4e0 100%);border:1px solid #8a94a2;box-shadow:0 0 0 1px rgba(255,255,255,.6) inset,0 0 1px 1px #c4c4c0"></div>
<div class="abs" style="left:719px;top:129px;width:26px;height:26px;border-radius:50%;background:linear-gradient(#f2f2f0 0,#e6e6e2 47%,#d8d8d4 53%,#e4e4e0 100%);border:1px solid #8a94a2;box-shadow:0 0 0 1px rgba(255,255,255,.6) inset,0 0 1px 1px #c4c4c0"></div>
<svg class="abs" style="left:691px;top:129px" width="56" height="26" viewBox="0 0 56 26"><g fill="#f6f6f4" stroke="#c4c4c0" stroke-width=".7"><path d="M6 13l7-7h2.500l-5 5.500h10.500v3h-10.500l5 5.500h-2.500z"/><path d="M50 13l-7-7h-2.500l5 5.500h-10.500v3h10.500l-5 5.500h2.500z"/></g></svg>
<div class="abs" style="left:761px;top:131px;width:391px;height:22px;background:#d4d0c8;border:1px solid;border-color:#808080 #fff #fff #808080"></div>
<svg class="abs" style="left:762px;top:132px" width="16" height="16" viewBox="0 0 16 16"><path d="M2 1.5l5-1v14l-5-1z" fill="#f0d878" stroke="#c8a840" stroke-width=".6"/><path d="M4 2.5h8.5a1 1 0 0 1 1 1v11h-9.500z" fill="#fbeeb0" stroke="#d4b860" stroke-width=".6"/><path d="M7 .7v14.300h5.500a1 1 0 0 0 1-1v-11.500a1 1 0 0 0-1-1z" fill="#f6dc80" stroke="#c8a840" stroke-width=".6"/><rect x="12" y="9" width="1" height="3" fill="#58b0e8"/></svg>
<svg class="abs" style="left:786px;top:140px" width="5" height="3" viewBox="0 0 5 3" shape-rendering="crispEdges"><path d="M0 0h5v1h-1v1h-1v1h-1v-1h-1v-1h-1z" fill="#000"/></svg>
<div class="t" style="left:797px;top:135.69px;font-size:11px;letter-spacing:0.015px;">Локальный диск (G:)</div>
<svg class="abs" style="left:909px;top:140px" width="5" height="3" viewBox="0 0 5 3" shape-rendering="crispEdges"><path d="M0 0h5v1h-1v1h-1v1h-1v-1h-1v-1h-1z" fill="#000"/></svg>
<div class="t" style="left:920px;top:135.69px;font-size:11px;letter-spacing:-0.452px;">IQ 200207 СРЕДНИЕ</div>
<svg class="abs" style="left:1028px;top:140px" width="5" height="3" viewBox="0 0 5 3" shape-rendering="crispEdges"><path d="M0 0h5v1h-1v1h-1v1h-1v-1h-1v-1h-1z" fill="#000"/></svg>
<svg class="abs" style="left:1112px;top:140px" width="7" height="4" viewBox="0 0 7 4" shape-rendering="crispEdges"><path d="M0 0h7v1h-1v1h-1v1h-1v1h-1v-1h-1v-1h-1v-1h-1z" fill="#000"/></svg>
<div class="abs" style="left:1131px;top:132px;width:20px;height:19px;border-radius:2px;background:linear-gradient(#90d8a8 0,#58c070 25%,#00a010 45%,#10a818 70%,#48d040 100%);border:1px solid #8a9a8a"></div>
<svg class="abs" style="left:1131px;top:132px" width="20" height="19" viewBox="0 0 20 19"><path d="M7 2.500l1.800 1l-1.800 3l2 1.200l-4.500 2.300l-2-4.500l2 1z" fill="#fff"/><path d="M13.500 16.500l-1.800-1l1.800-3.500l-2.200-1.200l4.500-2.800l2 4.800l-2-1z" fill="#fff"/></svg>
<div class="abs" style="left:1156px;top:131px;width:182px;height:22px;background:#fff;border:1px solid;border-color:#808080 #fff #fff #808080;box-shadow:inset 1px 1px 0 #404040"></div>
<div class="t" style="left:1165px;top:136.69px;font-size:11px;letter-spacing:-0.303px;">Поиск: IQ 200207 СРЕДНИЕ</div>
<div class="abs" style="left:1340px;top:132px;width:19px;height:20px;border-radius:2px;background:linear-gradient(#7098e0 0,#2858c0 45%,#2050b8 55%,#50b8f0 100%);border:1px solid #3060a8"></div>
<svg class="abs" style="left:1340px;top:132px" width="19" height="20" viewBox="0 0 19 20"><circle cx="11.500" cy="7.500" r="3.300" fill="#2a58c0" stroke="#fff" stroke-width="1.800"/><path d="M9 10l-4.500 4.500" stroke="#fff" stroke-width="2.200" stroke-linecap="round"/></svg>
<div class="t" style="left:700px;top:169.69px;font-size:11px;letter-spacing:0.140px;">Упорядочить</div>
<svg class="abs" style="left:776px;top:173px" width="7" height="4" viewBox="0 0 7 4" shape-rendering="crispEdges"><path d="M0 0h7v1h-1v1h-1v1h-1v1h-1v-1h-1v-1h-1v-1h-1z" fill="#000"/></svg>
<div class="t" style="left:803px;top:169.69px;font-size:11px;letter-spacing:-0.010px;">Новая папка</div>
<svg class="abs" style="left:1252px;top:168px" width="16" height="14" viewBox="0 0 16 14" shape-rendering="crispEdges"><g fill="#fff" stroke="#7888a8" stroke-width="1"><rect x=".5" y=".5" width="4" height="4"/><rect x=".5" y="4.500" width="4" height="4"/><rect x=".5" y="8.500" width="4" height="4"/><rect x="8.500" y=".5" width="4" height="4"/><rect x="8.500" y="4.500" width="4" height="4"/><rect x="8.500" y="8.500" width="4" height="4"/></g><g><rect x="2" y="2" width="1" height="1" fill="#20a030"/><rect x="2" y="6" width="1" height="1" fill="#e02020"/><rect x="2" y="10" width="1" height="1" fill="#2050e0"/><rect x="10" y="2" width="1" height="1" fill="#20a030"/><rect x="10" y="6" width="1" height="1" fill="#e02020"/><rect x="10" y="10" width="1" height="1" fill="#2050e0"/><path d="M5 2.500h2M5 6.500h2M5 10.500h2M13 2.500h2M13 6.500h2M13 10.500h2" stroke="#7888a8"/></g></svg>
<svg class="abs" style="left:1281px;top:173px" width="7" height="4" viewBox="0 0 7 4" shape-rendering="crispEdges"><path d="M0 0h7v1h-1v1h-1v1h-1v1h-1v-1h-1v-1h-1v-1h-1z" fill="#000"/></svg>
<svg class="abs" style="left:1303px;top:168px" width="17" height="14" viewBox="0 0 17 14" shape-rendering="crispEdges"><rect x=".5" y=".5" width="15" height="13" fill="#fff" stroke="#7088a8"/><path d="M1 2.500h9" stroke="#a8b8d0"/><rect x="10" y="1" width="5" height="12" fill="#a8ecf8"/><path d="M9.500 1v12" stroke="#7088a8"/><rect x="11" y="2" width="3" height="10" fill="#68b0d8"/></svg>
<div class="abs" style="left:1331px;top:167px;width:16px;height:16px;border-radius:50%;background:radial-gradient(circle at 45% 25%,#7090e8,#1838b0 60%,#102890);border:1px solid #70788a;box-shadow:0 0 0 1px #c0c0c4"></div>
<div class="t" style="left:1331px;top:169.84px;font-size:12px;font-weight:bold;color:#fff;width:16px;text-align:center;">?</div>
<div class="abs" style="left:687px;top:191px;width:195px;height:310px;background:#fff;overflow:hidden"></div>
<div class="abs" style="left:688px;top:457px;width:194px;height:19px;background:#d4d0c8"></div>
<div class="abs chk" style="left:882px;top:191px;width:16px;height:310px"></div>
<div class="sbtn" style="left:882px;top:191px;width:16px;height:16px"></div>
<svg class="abs" style="left:882px;top:191px" width="16" height="16"><path d="M4 9.500h7l-3.500-3.500z" fill="#000"/></svg>
<div class="sbtn" style="left:882px;top:223px;width:16px;height:231px"></div>
<div class="sbtn" style="left:882px;top:485px;width:16px;height:16px"></div>
<svg class="abs" style="left:882px;top:485px" width="16" height="16"><path d="M4 6.500h7l-3.500 3.500z" fill="#000"/></svg>
<svg class="abs" style="left:717px;top:192px" width="16" height="16" viewBox="0 0 16 16"><path d="M2 1.5l5-1v14l-5-1z" fill="#f0d878" stroke="#c8a840" stroke-width=".6"/><path d="M4 2.5h8.5a1 1 0 0 1 1 1v11h-9.500z" fill="#fbeeb0" stroke="#d4b860" stroke-width=".6"/><path d="M7 .7v14.300h5.500a1 1 0 0 0 1-1v-11.500a1 1 0 0 0-1-1z" fill="#f6dc80" stroke="#c8a840" stroke-width=".6"/><rect x="12" y="9" width="1" height="3" fill="#58b0e8"/></svg>
<svg class="abs" style="left:723px;top:198px" width="10" height="10" viewBox="0 0 11 11"><path d="M3 0h5v5h3l-5.500 6l-5.500-6h3z" fill="#3090e8" stroke="#1860c0" stroke-width=".7"/></svg>
<div class="t" style="left:738px;top:195.69px;font-size:11px;letter-spacing:0.341px;">Загрузки</div>
<svg class="abs" style="left:717px;top:212px" width="16" height="16" viewBox="0 0 16 16"><rect x=".5" y="1.500" width="15" height="12" fill="#3060c8" stroke="#a0b0c8"/><path d="M1 2h14v6c-5 0-9 2-14 4z" fill="#5088e8"/><rect x="1" y="11" width="14" height="2" fill="#203050"/><circle cx="3" cy="12" r="1.300" fill="#e8a020"/></svg>
<div class="t" style="left:738px;top:214.69px;font-size:11px;letter-spacing:-0.088px;">Рабочий стол</div>
<svg class="abs" style="left:707px;top:250px" width="16" height="16" viewBox="0 0 16 16"><path d="M1 3h4l1 1.500h9v9h-14z" fill="#f8e088" stroke="#c8a840" stroke-width=".7"/><rect x="1.500" y="2" width="2" height="1" fill="#40b040"/><path d="M2.500 14.500v-5a1.500 1.500 0 0 1 1.500-1.500h8a1.500 1.500 0 0 1 1.500 1.500v5h-3v-3h-5v3z" fill="#68b8f0" stroke="#3888d0" stroke-width=".8"/></svg>
<div class="t" style="left:727px;top:252.69px;font-size:11px;letter-spacing:0.140px;">Библиотеки</div>
<svg class="abs" style="left:717px;top:269px" width="16" height="16" viewBox="0 0 16 16" shape-rendering="crispEdges"><rect x="1" y="1" width="14" height="14" fill="#404848"/><rect x="4" y="1" width="8" height="7" fill="#4890d8"/><rect x="4" y="8" width="8" height="7" fill="#3878c0"/><path d="M4 5l4 3l4-4v4h-8zM4 12l3 2l5-4v5h-8z" fill="#e88030"/><g fill="#fff"><rect x="2" y="2" width="1" height="2"/><rect x="2" y="5" width="1" height="2"/><rect x="2" y="8" width="1" height="2"/><rect x="2" y="11" width="1" height="2"/><rect x="13" y="2" width="1" height="2"/><rect x="13" y="5" width="1" height="2"/><rect x="13" y="8" width="1" height="2"/><rect x="13" y="11" width="1" height="2"/></g></svg>
<div class="t" style="left:738px;top:271.69px;font-size:11px;letter-spacing:-0.227px;">Видео</div>
<svg class="abs" style="left:717px;top:288px" width="16" height="16" viewBox="0 0 16 16"><path d="M2.500 .5h8l3 3v12h-11z" fill="#fff" stroke="#8890a0"/><path d="M10.500 .5v3h3" fill="#e8e8f0" stroke="#8890a0"/><g stroke="#90a0c8" stroke-width="1"><path d="M4 5.500h4M4 7.500h4M4 9.500h8M4 11.500h8M4 13.500h8"/></g><rect x="9" y="5" width="3" height="3" fill="#4080d0"/></svg>
<div class="t" style="left:738px;top:290.69px;font-size:11px;letter-spacing:0.144px;">Документы</div>
<svg class="abs" style="left:717px;top:307px" width="16" height="16" viewBox="0 0 16 16"><rect x=".5" y="2.500" width="15" height="11" fill="#fff" stroke="#9098a8"/><rect x="2" y="4" width="12" height="8" fill="#60a8e8"/><path d="M2 9c3-2 5 0 7-1s3-1 5 0v4h-12z" fill="#308850"/><path d="M2 10.500c4-1 8 0 12-.5v2h-12z" fill="#1860a0"/></svg>
<div class="t" style="left:738px;top:309.69px;font-size:11px;letter-spacing:-0.103px;">Изображения</div>
<svg class="abs" style="left:717px;top:326px" width="16" height="16" viewBox="0 0 16 16"><path d="M8 1c1 3 5 3 4 8c-.5-2.500-2-3-3-3.200v6.500a3.500 3 0 1 1-1.500-2.500z" fill="#2890e8" stroke="#1060c0" stroke-width=".6"/></svg>
<div class="t" style="left:738px;top:328.69px;font-size:11px;letter-spacing:0.015px;">Музыка</div>
<svg class="abs" style="left:707px;top:364px" width="16" height="16" viewBox="0 0 16 16"><circle cx="3.500" cy="8" r="2.500" fill="#3060d0"/><circle cx="12" cy="11" r="3" fill="#3060d0"/><circle cx="9.500" cy="3.500" r="2.700" fill="#4878e0"/><circle cx="7.500" cy="8.500" r="3.800" fill="#38a848"/><circle cx="6.500" cy="7.300" r="1.300" fill="#a8e8a8"/><circle cx="3" cy="7.300" r=".8" fill="#a8c0f8"/><circle cx="9" cy="2.800" r=".9" fill="#c0d0ff"/><circle cx="11.300" cy="10" r="1" fill="#a8c0f8"/></svg>
<div class="t" style="left:727px;top:366.69px;font-size:11px;letter-spacing:-0.052px;">Домашняя группа</div>
<svg class="abs" style="left:707px;top:402px" width="16" height="16" viewBox="0 0 16 16"><rect x="4.500" y="1.500" width="11" height="8" fill="#e0e4e8" stroke="#7880a0"/><rect x="6" y="3" width="8" height="5" fill="#1838c0"/><rect x="6" y="3" width="3" height="2" fill="#5080f0"/><path d="M8 10h4v2h2v1.500h-8v-1.500h2z" fill="#b0b8c0" stroke="#808890" stroke-width=".5"/><rect x="1" y="6" width="2.500" height="8" fill="#d8dce0" stroke="#7880a0" stroke-width=".7"/><rect x="1.700" y="7" width="1" height="1" fill="#40c040"/></svg>
<div class="t" style="left:727px;top:404.69px;font-size:11px;letter-spacing:0.119px;">Компьютер</div>
<svg class="abs" style="left:717px;top:421px" width="16" height="16" viewBox="0 0 16 16"><path d="M4 1l3.500 1v3l-3.500-.8z" fill="#e84020"/><path d="M8 2l3.500-1.500v3.500l-3.500.8z" fill="#48b030"/><path d="M3.500 5l3.500.8v3l-3.500-.8z" fill="#3080e0"/><path d="M8 5.800l3.500-.8v3.200l-3.500.6z" fill="#f0c020"/><path d="M1 10.500q0-1.500 2-1.500h10q2 0 2 1.500v3q0 1.500-2 1.500h-10q-2 0-2-1.500z" fill="#58a8b8" stroke="#386878" stroke-width=".7"/><rect x="11.500" y="12" width="2" height="2" fill="#50e050"/></svg>
<div class="t" style="left:738px;top:423.69px;font-size:11px;letter-spacing:0.048px;">Локальный диск (C:)</div>
<svg class="abs" style="left:717px;top:440px" width="16" height="16" viewBox="0 0 16 16"><path d="M.8 9.500q0-2 2.500-2h9.400q2.500 0 2.500 2v3.500q0 2-2.500 2h-9.400q-2.500 0-2.500-2z" fill="#e8e8e8" stroke="#808080" stroke-width=".8"/><path d="M1.500 10.500h13" stroke="#fff" stroke-width="1.500"/><path d="M1.200 11.500h13.600v1.500q0 1.500-2 1.500h-9.600q-2 0-2-1.500z" fill="#c8c8c8"/><rect x="11.500" y="11.500" width="2" height="2.500" fill="#40c040" stroke="#207020" stroke-width=".4"/></svg>
<div class="t" style="left:738px;top:442.69px;font-size:11px;letter-spacing:0.048px;">Локальный диск (D:)</div>
<svg class="abs" style="left:717px;top:459px" width="16" height="16" viewBox="0 0 16 16"><path d="M.8 9.500q0-2 2.500-2h9.400q2.500 0 2.500 2v3.500q0 2-2.500 2h-9.400q-2.500 0-2.500-2z" fill="#e8e8e8" stroke="#808080" stroke-width=".8"/><path d="M1.500 10.500h13" stroke="#fff" stroke-width="1.500"/><path d="M1.200 11.500h13.600v1.500q0 1.500-2 1.500h-9.600q-2 0-2-1.500z" fill="#c8c8c8"/><rect x="11.500" y="11.500" width="2" height="2.500" fill="#40c040" stroke="#207020" stroke-width=".4"/></svg>
<div class="t" style="left:738px;top:461.69px;font-size:11px;letter-spacing:0.015px;">Локальный диск (G:)</div>
<div class="abs" style="left:707px;top:496px;width:16px;height:5px;overflow:hidden"><div style="width:13px;height:13px;border-radius:50%;background:radial-gradient(circle at 40% 40%,#80d0f0,#2868c8);margin-left:1px"></div></div>
<div class="abs" style="left:901px;top:191px;width:461px;height:310px;background:#fff"></div>
<div class="abs" style="left:915px;top:218px;width:245px;height:20px;background:#0a246a"></div>
<svg class="abs" style="left:919px;top:198px" width="16" height="16" viewBox="0 0 16 16"><path d="M2 1.5l5-1v14l-5-1z" fill="#f0d878" stroke="#c8a840" stroke-width=".6"/><path d="M4 2.5h8.5a1 1 0 0 1 1 1v11h-9.500z" fill="#fbeeb0" stroke="#d4b860" stroke-width=".6"/><path d="M7 .7v14.300h5.500a1 1 0 0 0 1-1v-11.500a1 1 0 0 0-1-1z" fill="#f6dc80" stroke="#c8a840" stroke-width=".6"/><rect x="12" y="9" width="1" height="3" fill="#58b0e8"/></svg>
<div class="t" style="left:936px;top:201.69px;font-size:11px;letter-spacing:0.046px;">2020.02.06_00-31-26_fft4194304_ov75_int16_qrg919.000-921.000</div>
<svg class="abs" style="left:920px;top:220px" width="15" height="16" viewBox="0 0 15 16"><path d="M1.500 .5h8.500l3.500 3.500v11.500h-12z" fill="#fff" stroke="#8c8c90"/><path d="M10 .5v3.500h3.500" fill="#f0f0f4" stroke="#8c8c90"/><rect x="2" y="5" width="6" height="7" fill="#485060"/><rect x="3" y="6" width="4" height="2" fill="#70c0f0"/><rect x="3" y="9" width="4" height="2" fill="#60b0e8"/><rect x="4" y="6" width="1" height="1" fill="#e04040"/><g fill="#fff"><rect x="2" y="6" width="1" height="1"/><rect x="2" y="8" width="1" height="1"/><rect x="2" y="10" width="1" height="1"/></g><path d="M8 4c1.200 2 4.500 2.500 3.500 6.800c-.4-1.800-1.600-2.400-2.500-2.600v3.600a2.400 2.100 0 1 1-1-1.800z" fill="#2898f0" stroke="#1870d0" stroke-width=".4"/></svg>
<div class="t" style="left:936px;top:222.69px;font-size:11px;color:#fff;letter-spacing:-0.087px;">06-Feb-2020 003136.201 0.920MHz 000.wav</div>
<svg class="abs" style="left:920px;top:241px" width="15" height="16" viewBox="0 0 15 16"><path d="M1.500 .5h8.500l3.500 3.500v11.500h-12z" fill="#fff" stroke="#8c8c90"/><path d="M10 .5v3.500h3.500" fill="#f0f0f4" stroke="#8c8c90"/><rect x="2" y="5" width="6" height="7" fill="#485060"/><rect x="3" y="6" width="4" height="2" fill="#70c0f0"/><rect x="3" y="9" width="4" height="2" fill="#60b0e8"/><rect x="4" y="6" width="1" height="1" fill="#e04040"/><g fill="#fff"><rect x="2" y="6" width="1" height="1"/><rect x="2" y="8" width="1" height="1"/><rect x="2" y="10" width="1" height="1"/></g><path d="M8 4c1.200 2 4.500 2.500 3.500 6.800c-.4-1.800-1.600-2.400-2.500-2.600v3.600a2.400 2.100 0 1 1-1-1.800z" fill="#2898f0" stroke="#1870d0" stroke-width=".4"/></svg>
<div class="t" style="left:936px;top:243.69px;font-size:11px;letter-spacing:-0.087px;">06-Feb-2020 003136.201 0.920MHz 001.wav</div>
<svg class="abs" style="left:920px;top:262px" width="15" height="16" viewBox="0 0 15 16"><path d="M1.500 .5h8.500l3.500 3.500v11.500h-12z" fill="#fff" stroke="#8c8c90"/><path d="M10 .5v3.500h3.500" fill="#f0f0f4" stroke="#8c8c90"/><rect x="2" y="5" width="6" height="7" fill="#485060"/><rect x="3" y="6" width="4" height="2" fill="#70c0f0"/><rect x="3" y="9" width="4" height="2" fill="#60b0e8"/><rect x="4" y="6" width="1" height="1" fill="#e04040"/><g fill="#fff"><rect x="2" y="6" width="1" height="1"/><rect x="2" y="8" width="1" height="1"/><rect x="2" y="10" width="1" height="1"/></g><path d="M8 4c1.200 2 4.500 2.500 3.500 6.800c-.4-1.800-1.600-2.400-2.500-2.600v3.600a2.400 2.100 0 1 1-1-1.800z" fill="#2898f0" stroke="#1870d0" stroke-width=".4"/></svg>
<div class="t" style="left:936px;top:264.69px;font-size:11px;letter-spacing:-0.087px;">06-Feb-2020 003136.201 0.920MHz 002.wav</div>
<svg class="abs" style="left:920px;top:283px" width="15" height="16" viewBox="0 0 15 16"><path d="M1.500 .5h8.500l3.500 3.500v11.500h-12z" fill="#fff" stroke="#8c8c90"/><path d="M10 .5v3.500h3.500" fill="#f0f0f4" stroke="#8c8c90"/><rect x="2" y="5" width="6" height="7" fill="#485060"/><rect x="3" y="6" width="4" height="2" fill="#70c0f0"/><rect x="3" y="9" width="4" height="2" fill="#60b0e8"/><rect x="4" y="6" width="1" height="1" fill="#e04040"/><g fill="#fff"><rect x="2" y="6" width="1" height="1"/><rect x="2" y="8" width="1" height="1"/><rect x="2" y="10" width="1" height="1"/></g><path d="M8 4c1.200 2 4.500 2.500 3.500 6.800c-.4-1.800-1.600-2.400-2.500-2.600v3.600a2.400 2.100 0 1 1-1-1.800z" fill="#2898f0" stroke="#1870d0" stroke-width=".4"/></svg>
<div class="t" style="left:936px;top:285.69px;font-size:11px;letter-spacing:-0.087px;">06-Feb-2020 003136.201 0.920MHz 003.wav</div>
<svg class="abs" style="left:920px;top:304px" width="15" height="16" viewBox="0 0 15 16"><path d="M1.500 .5h8.500l3.500 3.500v11.500h-12z" fill="#fff" stroke="#8c8c90"/><path d="M10 .5v3.500h3.500" fill="#f0f0f4" stroke="#8c8c90"/><rect x="2" y="5" width="6" height="7" fill="#485060"/><rect x="3" y="6" width="4" height="2" fill="#70c0f0"/><rect x="3" y="9" width="4" height="2" fill="#60b0e8"/><rect x="4" y="6" width="1" height="1" fill="#e04040"/><g fill="#fff"><rect x="2" y="6" width="1" height="1"/><rect x="2" y="8" width="1" height="1"/><rect x="2" y="10" width="1" height="1"/></g><path d="M8 4c1.200 2 4.500 2.500 3.500 6.800c-.4-1.800-1.600-2.400-2.500-2.600v3.600a2.400 2.100 0 1 1-1-1.800z" fill="#2898f0" stroke="#1870d0" stroke-width=".4"/></svg>
<div class="t" style="left:936px;top:306.69px;font-size:11px;letter-spacing:-0.087px;">06-Feb-2020 003136.201 0.920MHz 004.wav</div>
<svg class="abs" style="left:920px;top:325px" width="15" height="16" viewBox="0 0 15 16"><path d="M1.500 .5h8.500l3.500 3.500v11.500h-12z" fill="#fff" stroke="#8c8c90"/><path d="M10 .5v3.500h3.500" fill="#f0f0f4" stroke="#8c8c90"/><rect x="2" y="5" width="6" height="7" fill="#485060"/><rect x="3" y="6" width="4" height="2" fill="#70c0f0"/><rect x="3" y="9" width="4" height="2" fill="#60b0e8"/><rect x="4" y="6" width="1" height="1" fill="#e04040"/><g fill="#fff"><rect x="2" y="6" width="1" height="1"/><rect x="2" y="8" width="1" height="1"/><rect x="2" y="10" width="1" height="1"/></g><path d="M8 4c1.200 2 4.500 2.500 3.500 6.800c-.4-1.800-1.600-2.400-2.500-2.600v3.600a2.400 2.100 0 1 1-1-1.800z" fill="#2898f0" stroke="#1870d0" stroke-width=".4"/></svg>
<div class="t" style="left:936px;top:327.69px;font-size:11px;letter-spacing:-0.087px;">06-Feb-2020 003136.201 0.920MHz 005.wav</div>
<svg class="abs" style="left:920px;top:346px" width="15" height="16" viewBox="0 0 15 16"><path d="M1.500 .5h8.500l3.500 3.500v11.500h-12z" fill="#fff" stroke="#8c8c90"/><path d="M10 .5v3.500h3.500" fill="#f0f0f4" stroke="#8c8c90"/><rect x="2" y="5" width="6" height="7" fill="#485060"/><rect x="3" y="6" width="4" height="2" fill="#70c0f0"/><rect x="3" y="9" width="4" height="2" fill="#60b0e8"/><rect x="4" y="6" width="1" height="1" fill="#e04040"/><g fill="#fff"><rect x="2" y="6" width="1" height="1"/><rect x="2" y="8" width="1" height="1"/><rect x="2" y="10" width="1" height="1"/></g><path d="M8 4c1.200 2 4.500 2.500 3.500 6.800c-.4-1.800-1.600-2.400-2.500-2.600v3.600a2.400 2.100 0 1 1-1-1.800z" fill="#2898f0" stroke="#1870d0" stroke-width=".4"/></svg>
<div class="t" style="left:936px;top:348.69px;font-size:11px;letter-spacing:-0.087px;">06-Feb-2020 003136.201 0.920MHz 006.wav</div>
<svg class="abs" style="left:920px;top:367px" width="15" height="16" viewBox="0 0 15 16"><path d="M1.500 .5h8.500l3.500 3.500v11.500h-12z" fill="#fff" stroke="#8c8c90"/><path d="M10 .5v3.500h3.500" fill="#f0f0f4" stroke="#8c8c90"/><rect x="2" y="5" width="6" height="7" fill="#485060"/><rect x="3" y="6" width="4" height="2" fill="#70c0f0"/><rect x="3" y="9" width="4" height="2" fill="#60b0e8"/><rect x="4" y="6" width="1" height="1" fill="#e04040"/><g fill="#fff"><rect x="2" y="6" width="1" height="1"/><rect x="2" y="8" width="1" height="1"/><rect x="2" y="10" width="1" height="1"/></g><path d="M8 4c1.200 2 4.500 2.500 3.500 6.800c-.4-1.800-1.600-2.400-2.500-2.600v3.600a2.400 2.100 0 1 1-1-1.800z" fill="#2898f0" stroke="#1870d0" stroke-width=".4"/></svg>
<div class="t" style="left:936px;top:369.69px;font-size:11px;letter-spacing:-0.087px;">06-Feb-2020 003136.201 0.920MHz 007.wav</div>
<svg class="abs" style="left:920px;top:388px" width="15" height="16" viewBox="0 0 15 16"><path d="M1.500 .5h8.500l3.500 3.500v11.500h-12z" fill="#fff" stroke="#8c8c90"/><path d="M10 .5v3.500h3.500" fill="#f0f0f4" stroke="#8c8c90"/><rect x="2" y="5" width="6" height="7" fill="#485060"/><rect x="3" y="6" width="4" height="2" fill="#70c0f0"/><rect x="3" y="9" width="4" height="2" fill="#60b0e8"/><rect x="4" y="6" width="1" height="1" fill="#e04040"/><g fill="#fff"><rect x="2" y="6" width="1" height="1"/><rect x="2" y="8" width="1" height="1"/><rect x="2" y="10" width="1" height="1"/></g><path d="M8 4c1.200 2 4.500 2.500 3.500 6.800c-.4-1.800-1.600-2.400-2.500-2.600v3.600a2.400 2.100 0 1 1-1-1.800z" fill="#2898f0" stroke="#1870d0" stroke-width=".4"/></svg>
<div class="t" style="left:936px;top:390.69px;font-size:11px;letter-spacing:-0.087px;">06-Feb-2020 003136.201 0.920MHz 008.wav</div>
<svg class="abs" style="left:920px;top:409px" width="15" height="16" viewBox="0 0 15 16"><path d="M1.500 .5h8.500l3.500 3.500v11.500h-12z" fill="#fff" stroke="#8c8c90"/><path d="M10 .5v3.500h3.500" fill="#f0f0f4" stroke="#8c8c90"/><rect x="2" y="5" width="6" height="7" fill="#485060"/><rect x="3" y="6" width="4" height="2" fill="#70c0f0"/><rect x="3" y="9" width="4" height="2" fill="#60b0e8"/><rect x="4" y="6" width="1" height="1" fill="#e04040"/><g fill="#fff"><rect x="2" y="6" width="1" height="1"/><rect x="2" y="8" width="1" height="1"/><rect x="2" y="10" width="1" height="1"/></g><path d="M8 4c1.200 2 4.500 2.500 3.500 6.800c-.4-1.800-1.600-2.400-2.500-2.600v3.600a2.400 2.100 0 1 1-1-1.800z" fill="#2898f0" stroke="#1870d0" stroke-width=".4"/></svg>
<div class="t" style="left:936px;top:411.69px;font-size:11px;letter-spacing:-0.087px;">06-Feb-2020 003136.201 0.920MHz 009.wav</div>
<svg class="abs" style="left:920px;top:430px" width="15" height="16" viewBox="0 0 15 16"><path d="M1.500 .5h8.500l3.500 3.500v11.500h-12z" fill="#fff" stroke="#8c8c90"/><path d="M10 .5v3.500h3.500" fill="#f0f0f4" stroke="#8c8c90"/><rect x="2" y="5" width="6" height="7" fill="#485060"/><rect x="3" y="6" width="4" height="2" fill="#70c0f0"/><rect x="3" y="9" width="4" height="2" fill="#60b0e8"/><rect x="4" y="6" width="1" height="1" fill="#e04040"/><g fill="#fff"><rect x="2" y="6" width="1" height="1"/><rect x="2" y="8" width="1" height="1"/><rect x="2" y="10" width="1" height="1"/></g><path d="M8 4c1.200 2 4.500 2.500 3.500 6.800c-.4-1.800-1.600-2.400-2.500-2.600v3.600a2.400 2.100 0 1 1-1-1.800z" fill="#2898f0" stroke="#1870d0" stroke-width=".4"/></svg>
<div class="t" style="left:936px;top:432.69px;font-size:11px;letter-spacing:-0.087px;">06-Feb-2020 003136.201 0.920MHz 010.wav</div>
<svg class="abs" style="left:920px;top:451px" width="15" height="16" viewBox="0 0 15 16"><path d="M1.500 .5h8.500l3.500 3.500v11.500h-12z" fill="#fff" stroke="#8c8c90"/><path d="M10 .5v3.500h3.500" fill="#f0f0f4" stroke="#8c8c90"/><rect x="2" y="5" width="6" height="7" fill="#485060"/><rect x="3" y="6" width="4" height="2" fill="#70c0f0"/><rect x="3" y="9" width="4" height="2" fill="#60b0e8"/><rect x="4" y="6" width="1" height="1" fill="#e04040"/><g fill="#fff"><rect x="2" y="6" width="1" height="1"/><rect x="2" y="8" width="1" height="1"/><rect x="2" y="10" width="1" height="1"/></g><path d="M8 4c1.200 2 4.500 2.500 3.500 6.800c-.4-1.800-1.600-2.400-2.500-2.600v3.600a2.400 2.100 0 1 1-1-1.800z" fill="#2898f0" stroke="#1870d0" stroke-width=".4"/></svg>
<div class="t" style="left:936px;top:453.69px;font-size:11px;letter-spacing:-0.066px;">06-Feb-2020 003136.201 0.920MHz 011.wav</div>
<div class="abs" style="left:1288px;top:191px;width:74px;height:290px;overflow:hidden">
<svg class="abs" style="left:0px;top:7px" width="15" height="16" viewBox="0 0 15 16"><path d="M1.500 .5h8.500l3.500 3.500v11.500h-12z" fill="#fff" stroke="#8c8c90"/><path d="M10 .5v3.500h3.500" fill="#f0f0f4" stroke="#8c8c90"/><rect x="2" y="5" width="6" height="7" fill="#485060"/><rect x="3" y="6" width="4" height="2" fill="#70c0f0"/><rect x="3" y="9" width="4" height="2" fill="#60b0e8"/><rect x="4" y="6" width="1" height="1" fill="#e04040"/><g fill="#fff"><rect x="2" y="6" width="1" height="1"/><rect x="2" y="8" width="1" height="1"/><rect x="2" y="10" width="1" height="1"/></g><path d="M8 4c1.200 2 4.500 2.500 3.500 6.800c-.4-1.800-1.600-2.400-2.500-2.600v3.600a2.400 2.100 0 1 1-1-1.800z" fill="#2898f0" stroke="#1870d0" stroke-width=".4"/></svg>
<div class="t" style="left:15px;top:10.69px;font-size:11px;letter-spacing:-0.09px">06-Feb-2020 003136.201 0.920MHz</div>
<svg class="abs" style="left:0px;top:28px" width="15" height="16" viewBox="0 0 15 16"><path d="M1.500 .5h8.500l3.500 3.500v11.500h-12z" fill="#fff" stroke="#8c8c90"/><path d="M10 .5v3.500h3.500" fill="#f0f0f4" stroke="#8c8c90"/><rect x="2" y="5" width="6" height="7" fill="#485060"/><rect x="3" y="6" width="4" height="2" fill="#70c0f0"/><rect x="3" y="9" width="4" height="2" fill="#60b0e8"/><rect x="4" y="6" width="1" height="1" fill="#e04040"/><g fill="#fff"><rect x="2" y="6" width="1" height="1"/><rect x="2" y="8" width="1" height="1"/><rect x="2" y="10" width="1" height="1"/></g><path d="M8 4c1.200 2 4.500 2.500 3.500 6.800c-.4-1.800-1.600-2.400-2.500-2.600v3.600a2.400 2.100 0 1 1-1-1.800z" fill="#2898f0" stroke="#1870d0" stroke-width=".4"/></svg>
<div class="t" style="left:15px;top:31.69px;font-size:11px;letter-spacing:-0.09px">06-Feb-2020 003136.201 0.920MHz</div>
<svg class="abs" style="left:0px;top:49px" width="15" height="16" viewBox="0 0 15 16"><path d="M1.500 .5h8.500l3.500 3.500v11.500h-12z" fill="#fff" stroke="#8c8c90"/><path d="M10 .5v3.500h3.500" fill="#f0f0f4" stroke="#8c8c90"/><rect x="2" y="5" width="6" height="7" fill="#485060"/><rect x="3" y="6" width="4" height="2" fill="#70c0f0"/><rect x="3" y="9" width="4" height="2" fill="#60b0e8"/><rect x="4" y="6" width="1" height="1" fill="#e04040"/><g fill="#fff"><rect x="2" y="6" width="1" height="1"/><rect x="2" y="8" width="1" height="1"/><rect x="2" y="10" width="1" height="1"/></g><path d="M8 4c1.200 2 4.500 2.500 3.500 6.800c-.4-1.800-1.600-2.400-2.500-2.600v3.600a2.400 2.100 0 1 1-1-1.800z" fill="#2898f0" stroke="#1870d0" stroke-width=".4"/></svg>
<div class="t" style="left:15px;top:52.69px;font-size:11px;letter-spacing:-0.09px">06-Feb-2020 003136.201 0.920MHz</div>
<svg class="abs" style="left:0px;top:70px" width="15" height="16" viewBox="0 0 15 16"><path d="M1.500 .5h8.500l3.500 3.500v11.500h-12z" fill="#fff" stroke="#8c8c90"/><path d="M10 .5v3.500h3.500" fill="#f0f0f4" stroke="#8c8c90"/><rect x="2" y="5" width="6" height="7" fill="#485060"/><rect x="3" y="6" width="4" height="2" fill="#70c0f0"/><rect x="3" y="9" width="4" height="2" fill="#60b0e8"/><rect x="4" y="6" width="1" height="1" fill="#e04040"/><g fill="#fff"><rect x="2" y="6" width="1" height="1"/><rect x="2" y="8" width="1" height="1"/><rect x="2" y="10" width="1" height="1"/></g><path d="M8 4c1.200 2 4.500 2.500 3.500 6.800c-.4-1.800-1.600-2.400-2.500-2.600v3.600a2.400 2.100 0 1 1-1-1.800z" fill="#2898f0" stroke="#1870d0" stroke-width=".4"/></svg>
<div class="t" style="left:15px;top:73.69px;font-size:11px;letter-spacing:-0.09px">06-Feb-2020 003136.201 0.920MHz</div>
<svg class="abs" style="left:0px;top:91px" width="15" height="16" viewBox="0 0 15 16"><path d="M1.500 .5h8.500l3.500 3.500v11.500h-12z" fill="#fff" stroke="#8c8c90"/><path d="M10 .5v3.500h3.500" fill="#f0f0f4" stroke="#8c8c90"/><rect x="2" y="5" width="6" height="7" fill="#485060"/><rect x="3" y="6" width="4" height="2" fill="#70c0f0"/><rect x="3" y="9" width="4" height="2" fill="#60b0e8"/><rect x="4" y="6" width="1" height="1" fill="#e04040"/><g fill="#fff"><rect x="2" y="6" width="1" height="1"/><rect x="2" y="8" width="1" height="1"/><rect x="2" y="10" width="1" height="1"/></g><path d="M8 4c1.200 2 4.500 2.500 3.500 6.800c-.4-1.800-1.600-2.400-2.500-2.600v3.600a2.400 2.100 0 1 1-1-1.800z" fill="#2898f0" stroke="#1870d0" stroke-width=".4"/></svg>
<div class="t" style="left:15px;top:94.69px;font-size:11px;letter-spacing:-0.09px">06-Feb-2020 003136.201 0.920MHz</div>
<svg class="abs" style="left:0px;top:112px" width="15" height="16" viewBox="0 0 15 16"><path d="M1.500 .5h8.500l3.500 3.500v11.500h-12z" fill="#fff" stroke="#8c8c90"/><path d="M10 .5v3.500h3.500" fill="#f0f0f4" stroke="#8c8c90"/><rect x="2" y="5" width="6" height="7" fill="#485060"/><rect x="3" y="6" width="4" height="2" fill="#70c0f0"/><rect x="3" y="9" width="4" height="2" fill="#60b0e8"/><rect x="4" y="6" width="1" height="1" fill="#e04040"/><g fill="#fff"><rect x="2" y="6" width="1" height="1"/><rect x="2" y="8" width="1" height="1"/><rect x="2" y="10" width="1" height="1"/></g><path d="M8 4c1.200 2 4.500 2.500 3.500 6.800c-.4-1.800-1.600-2.400-2.500-2.600v3.600a2.400 2.100 0 1 1-1-1.800z" fill="#2898f0" stroke="#1870d0" stroke-width=".4"/></svg>
<div class="t" style="left:15px;top:115.69px;font-size:11px;letter-spacing:-0.09px">06-Feb-2020 003136.201 0.920MHz</div>
<svg class="abs" style="left:0px;top:133px" width="15" height="16" viewBox="0 0 15 16"><path d="M1.500 .5h8.500l3.500 3.500v11.500h-12z" fill="#fff" stroke="#8c8c90"/><path d="M10 .5v3.500h3.500" fill="#f0f0f4" stroke="#8c8c90"/><rect x="2" y="5" width="6" height="7" fill="#485060"/><rect x="3" y="6" width="4" height="2" fill="#70c0f0"/><rect x="3" y="9" width="4" height="2" fill="#60b0e8"/><rect x="4" y="6" width="1" height="1" fill="#e04040"/><g fill="#fff"><rect x="2" y="6" width="1" height="1"/><rect x="2" y="8" width="1" height="1"/><rect x="2" y="10" width="1" height="1"/></g><path d="M8 4c1.200 2 4.500 2.500 3.500 6.800c-.4-1.800-1.600-2.400-2.500-2.600v3.600a2.400 2.100 0 1 1-1-1.800z" fill="#2898f0" stroke="#1870d0" stroke-width=".4"/></svg>
<div class="t" style="left:15px;top:136.69px;font-size:11px;letter-spacing:-0.09px">06-Feb-2020 003136.201 0.920MHz</div>
<svg class="abs" style="left:0px;top:154px" width="15" height="16" viewBox="0 0 15 16"><path d="M1.500 .5h8.500l3.500 3.500v11.500h-12z" fill="#fff" stroke="#8c8c90"/><path d="M10 .5v3.500h3.500" fill="#f0f0f4" stroke="#8c8c90"/><rect x="2" y="5" width="6" height="7" fill="#485060"/><rect x="3" y="6" width="4" height="2" fill="#70c0f0"/><rect x="3" y="9" width="4" height="2" fill="#60b0e8"/><rect x="4" y="6" width="1" height="1" fill="#e04040"/><g fill="#fff"><rect x="2" y="6" width="1" height="1"/><rect x="2" y="8" width="1" height="1"/><rect x="2" y="10" width="1" height="1"/></g><path d="M8 4c1.200 2 4.500 2.500 3.500 6.800c-.4-1.800-1.600-2.400-2.500-2.600v3.600a2.400 2.100 0 1 1-1-1.800z" fill="#2898f0" stroke="#1870d0" stroke-width=".4"/></svg>
<div class="t" style="left:15px;top:157.69px;font-size:11px;letter-spacing:-0.09px">06-Feb-2020 003136.201 0.920MHz</div>
<svg class="abs" style="left:0px;top:175px" width="15" height="16" viewBox="0 0 15 16"><path d="M1.500 .5h8.500l3.500 3.500v11.500h-12z" fill="#fff" stroke="#8c8c90"/><path d="M10 .5v3.500h3.500" fill="#f0f0f4" stroke="#8c8c90"/><rect x="2" y="5" width="6" height="7" fill="#485060"/><rect x="3" y="6" width="4" height="2" fill="#70c0f0"/><rect x="3" y="9" width="4" height="2" fill="#60b0e8"/><rect x="4" y="6" width="1" height="1" fill="#e04040"/><g fill="#fff"><rect x="2" y="6" width="1" height="1"/><rect x="2" y="8" width="1" height="1"/><rect x="2" y="10" width="1" height="1"/></g><path d="M8 4c1.200 2 4.500 2.500 3.500 6.800c-.4-1.800-1.600-2.400-2.500-2.600v3.600a2.400 2.100 0 1 1-1-1.800z" fill="#2898f0" stroke="#1870d0" stroke-width=".4"/></svg>
<div class="t" style="left:15px;top:178.69px;font-size:11px;letter-spacing:-0.09px">06-Feb-2020 003136.201 0.920MHz</div>
<svg class="abs" style="left:0px;top:196px" width="15" height="16" viewBox="0 0 15 16"><path d="M1.500 .5h8.500l3.500 3.500v11.500h-12z" fill="#fff" stroke="#8c8c90"/><path d="M10 .5v3.500h3.500" fill="#f0f0f4" stroke="#8c8c90"/><rect x="2" y="5" width="6" height="7" fill="#485060"/><rect x="3" y="6" width="4" height="2" fill="#70c0f0"/><rect x="3" y="9" width="4" height="2" fill="#60b0e8"/><rect x="4" y="6" width="1" height="1" fill="#e04040"/><g fill="#fff"><rect x="2" y="6" width="1" height="1"/><rect x="2" y="8" width="1" height="1"/><rect x="2" y="10" width="1" height="1"/></g><path d="M8 4c1.200 2 4.500 2.500 3.500 6.800c-.4-1.800-1.600-2.400-2.500-2.600v3.600a2.400 2.100 0 1 1-1-1.800z" fill="#2898f0" stroke="#1870d0" stroke-width=".4"/></svg>
<div class="t" style="left:15px;top:199.69px;font-size:11px;letter-spacing:-0.09px">06-Feb-2020 003136.201 0.920MHz</div>
<svg class="abs" style="left:0px;top:217px" width="15" height="16" viewBox="0 0 15 16"><path d="M1.500 .5h8.500l3.500 3.500v11.500h-12z" fill="#fff" stroke="#8c8c90"/><path d="M10 .5v3.500h3.500" fill="#f0f0f4" stroke="#8c8c90"/><rect x="2" y="5" width="6" height="7" fill="#485060"/><rect x="3" y="6" width="4" height="2" fill="#70c0f0"/><rect x="3" y="9" width="4" height="2" fill="#60b0e8"/><rect x="4" y="6" width="1" height="1" fill="#e04040"/><g fill="#fff"><rect x="2" y="6" width="1" height="1"/><rect x="2" y="8" width="1" height="1"/><rect x="2" y="10" width="1" height="1"/></g><path d="M8 4c1.200 2 4.500 2.500 3.500 6.800c-.4-1.800-1.600-2.400-2.500-2.600v3.600a2.400 2.100 0 1 1-1-1.800z" fill="#2898f0" stroke="#1870d0" stroke-width=".4"/></svg>
<div class="t" style="left:15px;top:220.69px;font-size:11px;letter-spacing:-0.09px">06-Feb-2020 003136.201 0.920MHz</div>
<svg class="abs" style="left:0px;top:238px" width="15" height="16" viewBox="0 0 15 16"><path d="M1.500 .5h8.500l3.500 3.500v11.500h-12z" fill="#fff" stroke="#8c8c90"/><path d="M10 .5v3.500h3.500" fill="#f0f0f4" stroke="#8c8c90"/><rect x="2" y="5" width="6" height="7" fill="#485060"/><rect x="3" y="6" width="4" height="2" fill="#70c0f0"/><rect x="3" y="9" width="4" height="2" fill="#60b0e8"/><rect x="4" y="6" width="1" height="1" fill="#e04040"/><g fill="#fff"><rect x="2" y="6" width="1" height="1"/><rect x="2" y="8" width="1" height="1"/><rect x="2" y="10" width="1" height="1"/></g><path d="M8 4c1.200 2 4.500 2.500 3.500 6.800c-.4-1.800-1.600-2.400-2.500-2.600v3.600a2.400 2.100 0 1 1-1-1.800z" fill="#2898f0" stroke="#1870d0" stroke-width=".4"/></svg>
<div class="t" style="left:15px;top:241.69px;font-size:11px;letter-spacing:-0.09px">06-Feb-2020 003136.201 0.920MHz</div>
<svg class="abs" style="left:0px;top:259px" width="15" height="16" viewBox="0 0 15 16"><path d="M1.500 .5h8.500l3.500 3.500v11.500h-12z" fill="#fff" stroke="#8c8c90"/><path d="M10 .5v3.500h3.500" fill="#f0f0f4" stroke="#8c8c90"/><rect x="2" y="5" width="6" height="7" fill="#485060"/><rect x="3" y="6" width="4" height="2" fill="#70c0f0"/><rect x="3" y="9" width="4" height="2" fill="#60b0e8"/><rect x="4" y="6" width="1" height="1" fill="#e04040"/><g fill="#fff"><rect x="2" y="6" width="1" height="1"/><rect x="2" y="8" width="1" height="1"/><rect x="2" y="10" width="1" height="1"/></g><path d="M8 4c1.200 2 4.500 2.500 3.500 6.800c-.4-1.800-1.600-2.400-2.500-2.600v3.600a2.400 2.100 0 1 1-1-1.800z" fill="#2898f0" stroke="#1870d0" stroke-width=".4"/></svg>
<div class="t" style="left:15px;top:262.69px;font-size:11px;letter-spacing:-0.09px">06-Feb-2020 003136.201 0.920MHz</div>
</div>
<div class="abs chk" style="left:901px;top:485px;width:461px;height:16px"></div>
<div class="sbtn" style="left:901px;top:485px;width:16px;height:16px"></div>
<svg class="abs" style="left:901px;top:485px" width="16" height="16"><path d="M9.500 4v7l-3.500-3.500z" fill="#000"/></svg>
<div class="sbtn" style="left:917px;top:485px;width:143px;height:16px"></div>
<div class="sbtn" style="left:1346px;top:485px;width:16px;height:16px"></div>
<svg class="abs" style="left:1346px;top:485px" width="16" height="16"><path d="M6.500 4v7l3.500-3.500z" fill="#000"/></svg>
<div class="t" style="left:817px;top:517.19px;font-size:11px;letter-spacing:0.361px;">Имя файла:</div>
<div class="sunk" style="left:887px;top:510px;width:257px;height:23px"></div>
<div class="t" style="left:891px;top:517.19px;font-size:11px;letter-spacing:0.119px;">06-Feb-2020 003136.201 0.920MHz 000.wav</div>
<div class="sbtn" style="left:1126px;top:512px;width:16px;height:19px"></div>
<svg class="abs" style="left:1126px;top:513px" width="16" height="18"><path d="M4.500 7.500h7l-3.500 3.500z" fill="#000"/></svg>
<div class="sunk" style="left:1157px;top:510px;width:187px;height:23px"></div>
<div class="t" style="left:1161px;top:517.19px;font-size:11px;letter-spacing:0.310px;">WAV files (*.wav)</div>
<div class="sbtn" style="left:1326px;top:512px;width:16px;height:19px"></div>
<svg class="abs" style="left:1326px;top:513px" width="16" height="18"><path d="M4.500 7.500h7l-3.500 3.500z" fill="#000"/></svg>
<div class="abs" style="left:1157px;top:539px;width:89px;height:26px;border:1px solid #000"></div>
<div class="btn" style="left:1158px;top:540px;width:87px;height:24px"></div>
<div class="t" style="left:1157px;top:546.69px;font-size:11px;width:89px;text-align:center;">Открыть</div>
<div class="btn" style="left:1257px;top:539px;width:89px;height:26px"></div>
<div class="t" style="left:1257px;top:546.69px;font-size:11px;width:89px;text-align:center;">Отмена</div>
<svg class="abs" style="left:1349px;top:565px" width="13" height="13" viewBox="0 0 13 13"><path d="M12 1L1 12M12 5L5 12M12 9L9 12" stroke="#808080" stroke-width="1.400"/><path d="M12 2L2 12M12 6L6 12M12 10L10 12" stroke="#fff" stroke-width=".8" transform="translate(1,1)"/></svg>
<div class="abs" style="left:0;top:723px;width:1366px;height:45px;background:#d4d0c8"></div>
<div class="abs" style="left:0;top:724px;width:1366px;height:1px;background:#fff"></div>
<div class="btn" style="left:2px;top:728px;width:51px;height:38px"></div>
<svg class="abs" style="left:4px;top:738px" width="17" height="16" viewBox="0 0 17 16"><path d="M2 3.500q3-2.500 6-1l-1.200 5q-3-1.500-6 1z" fill="#e85828"/><path d="M9 2.800q3 1.500 6.500-1l-1.200 5q-3.500 2.500-6.500 1z" fill="#68b838"/><path d="M.6 9q3-2.500 6-1l-1.200 5q-3-1.500-6 1z" fill="#3888e8"/><path d="M7.600 8.400q3 1.500 6.500-1l-1.200 5q-3.500 2.500-6.500 1z" fill="#f8c020"/></svg>
<div class="t" style="left:21px;top:741.69px;font-size:11px;font-weight:bold;letter-spacing:0.532px;">Пуск</div>
<div class="btn" style="left:62px;top:728px;width:40px;height:38px"></div>
<div class="abs" style="left:102px;top:728px;width:4px;height:38px;border:1px solid;border-color:#fff #404040 #404040 #d4d0c8;box-shadow:inset -1px -1px 0 #808080"></div>
<div class="abs" style="left:106px;top:728px;width:4px;height:38px;border:1px solid;border-color:#fff #404040 #404040 #d4d0c8;box-shadow:inset -1px -1px 0 #808080"></div>
<svg class="abs" style="left:66px;top:734px" width="33" height="30" viewBox="0 0 33 30"><defs><linearGradient id="ff" x1="0" y1="0" x2="0" y2="1"><stop offset="0" stop-color="#fdf4c4"/><stop offset="1" stop-color="#f6d870"/></linearGradient><linearGradient id="fs" x1="0" y1="0" x2="0" y2="1"><stop offset="0" stop-color="#a8e0f8"/><stop offset=".5" stop-color="#78c0ec"/><stop offset="1" stop-color="#58a8e4"/></linearGradient></defs><path d="M1.400 4.500q0-4 2-4h11.500q1.800 0 1.800 4z" fill="#f6e29a" stroke="#d8b860" stroke-width=".8"/><path d="M10.400 6q0-3.500 2-3.500h16q1.600 0 1.600 3.500z" fill="#f6e29a" stroke="#d8b860" stroke-width=".8"/><path d="M.4 4.700h17.800q0-.4 1.500-.4h10.500q1.500 0 1.500 1.500v20.600h-31.300z" fill="#f3d98a" stroke="#d4b45a" stroke-width=".8"/><path d="M18 8.400q0-4 2-4h10q1.700 0 1.700 4z" fill="#f8e6a0" stroke="#d8b860" stroke-width=".8"/><rect x="3.800" y="1" width="3" height="2" fill="#10c820"/><rect x="7" y="1" width="5.500" height="2" fill="#fff"/><rect x="12" y="3" width="2.800" height="2" fill="#e03828"/><rect x="15" y="3" width="6.300" height="2" fill="#fff"/><rect x="20" y="5.200" width="2.700" height="2" fill="#1898f0"/><rect x="23" y="5.200" width="5.200" height="2" fill="#fff"/><path d="M1.200 7.500h15.500l1.600 1.700h12.500v16.800h-29.600z" fill="url(#ff)"/><path d="M3.800 28.600v-10.100q0-2.500 2.500-2.500h19.100q2.500 0 2.500 2.500v10.100h-6.900v-6.300h-10.600v6.300z" fill="url(#fs)" stroke="#3a98dc" stroke-width="1"/><path d="M5 18.500q0-1.300 1.300-1.300h12" stroke="#e8f8ff" stroke-width="1.200" fill="none"/><path d="M7.500 11v9M5 17.500h6M10.500 13.500l-5 6" stroke="#fff" stroke-width=".7" opacity=".9"/></svg>
<div class="btn" style="left:112px;top:728px;width:48px;height:38px"></div>
<svg class="abs" style="left:120px;top:731px" width="32" height="32" viewBox="0 0 32 32"><circle cx="16" cy="16" r="15" fill="#f8c828"/><path d="M16 16L3.010 8.500A15 15 0 0 1 28.990 8.500z" fill="#e04838"/><path d="M16 1a15 15 0 0 1 12.990 7.500h-12.990z" fill="#e04838"/><path d="M16 16L3.010 8.500A15 15 0 0 0 16 31z" fill="#20a050"/><path d="M16 16l6.500 3.750l-6.500 11.250z" fill="#f8c828"/><path d="M16 8.500h12.990a15 15 0 0 1-12.990 22.500l6.500-11.250z" fill="#f8c828"/><path d="M16 16L9.500 19.750L3.010 8.500A15 15 0 0 0 16 31l6.500-11.250z" fill="#20a050"/><path d="M3.010 8.500A15 15 0 0 1 28.990 8.500h-12.990a7.500 7.500 0 0 0-6.500 3.750z" fill="#e04838"/><circle cx="16" cy="16" r="7.200" fill="#fff"/><circle cx="16" cy="16" r="5.800" fill="#4888f0"/></svg>
<div class="abs" style="left:170px;top:731px;width:32px;height:18px;background:linear-gradient(#f0f4ff 0,#8898f0 12%,#1818c8 30%,#0000a0 55%,#000078 80%,#000028 92%,#000 100%)"></div>
<div class="abs" style="left:172px;top:734px;width:28px;height:12px;border:1px solid #4858d0;border-bottom-color:#2028a0"></div>
<div class="abs" style="left:170px;top:749px;width:32px;height:14px;background:linear-gradient(#4848a8 0,#7878c8 30%,#c0c0f0 65%,#fff 100%)"></div>
<div class="t" style="left:170px;top:734.92px;font-size:12.5px;font-weight:bold;color:#f0c818;width:32px;text-align:center;transform:scaleX(1.12);text-shadow:0 1px 0 #806000;">WR</div>
<div class="t" style="left:180.5px;top:751.34px;font-size:12px;font-weight:bold;color:#70709a;font-style:italic;transform:scaleX(1.1);transform-origin:0 50%;">HD</div>
<div class="btn" style="left:212px;top:728px;width:48px;height:38px"></div>
<svg class="abs" style="left:218px;top:730px" width="40" height="35" viewBox="0 0 40 35"><circle cx="21.300" cy="21" r="11" fill="#c0c0c0"/><path d="M13.500 13.200a11 11 0 0 0-1 14" stroke="#fff" stroke-width="2" fill="none"/><path d="M21.300 10a11 11 0 0 1 7.800 18.800a11 11 0 0 1-16.500-.8" stroke="#000" stroke-width="1.800" fill="none" stroke-dasharray="2.500 .7"/><path d="M14 29.500q7 5 14.500 0" stroke="#000" stroke-width="2.400" fill="none"/><path d="M12.500 27q-2-3-1.500-8" stroke="#808080" stroke-width="1.400" fill="none"/><rect x="15.600" y="16.800" width="2.900" height="10.200" fill="#000"/><rect x="23.600" y="16.800" width="2.900" height="10.200" fill="#000"/><circle cx="11" cy="10" r="7.300" fill="#fff" stroke="#0808a8" stroke-width="3.200"/><circle cx="11" cy="10" r="5.800" fill="none" stroke="#2850f0" stroke-width="1.200" stroke-dasharray="1 2.030"/><path d="M11 5.500v4.800h3.800" stroke="#a00010" stroke-width="1.600" fill="none"/></svg>
<div class="btn" style="left:262px;top:728px;width:44px;height:38px"></div>
<div class="abs" style="left:306px;top:728px;width:4px;height:38px;border:1px solid;border-color:#fff #404040 #404040 #d4d0c8;box-shadow:inset -1px -1px 0 #808080"></div>
<div class="abs" style="left:269px;top:732px;width:31px;height:31px;background:#000;border-radius:1px"></div>
<div class="abs" style="left:268px;top:731px;width:30px;height:30px;background:linear-gradient(180deg,#5888d0 0,#4878c8 18%,#7ca0d8 44%,#4070b8 52%,#4478c0 75%,#5088d0 100%);border:1px solid;border-color:#506898 #284878 #284878 #506898"></div>
<div class="t" style="left:269px;top:730px;width:31px;text-align:center;font-family:'Liberation Serif',serif;font-size:33px;color:#fff;line-height:33px;transform:scaleX(.82)">K</div>
<div class="btn" style="left:312px;top:728px;width:48px;height:38px"></div>
<svg class="abs" style="left:320px;top:732px" width="32" height="30" viewBox="320 732 32 30"><defs><pattern id="dz" width="2" height="2" patternUnits="userSpaceOnUse"><rect width="2" height="2" fill="#0000f0"/><rect width="1" height="1" fill="#3878b8"/></pattern><pattern id="dw" width="2" height="2" patternUnits="userSpaceOnUse"><rect width="2" height="2" fill="#fff"/><rect width="1" height="1" fill="#0000f0"/></pattern><clipPath id="gc"><circle cx="335.700" cy="748" r="10.300"/></clipPath></defs><ellipse cx="336" cy="746.500" rx="15.200" ry="10.500" fill="#fff"/><path d="M323 741q6-8 14-8q8 0 13 7" stroke="#e8e8e8" stroke-width="1.500" fill="none" stroke-dasharray="2 1.500"/><circle cx="335.700" cy="748" r="10.600" fill="url(#dz)" stroke="#000" stroke-width="1"/><g clip-path="url(#gc)"><path d="M326 742q2-4 6-4.500l2 2l-3 3l-3 1z" fill="#008000"/><path d="M329 741l6-3.500l4 .5l-2 4l-3 4h-5l-1-3z" fill="url(#dw)"/><path d="M339 738l6 2l2.500 5l-1 6l-3 1l-1 5l-3 3l-2-5l-1-4l-3-2l1-3l3-1l1-3z" fill="#008000"/><path d="M326 751l2 5l2 2l-2-5z" fill="#008000"/><path d="M344 741l2 3v5l-2-2z" fill="#808878"/></g><g fill="#f8f000"><rect x="337" y="741" width="1" height="1"/><rect x="338" y="743" width="2" height="1"/><rect x="341" y="740" width="1" height="1"/><rect x="334" y="748" width="2" height="1"/><rect x="337" y="747" width="1" height="1"/><rect x="339" y="748" width="1" height="1"/><rect x="326" y="745" width="1" height="1"/><rect x="327" y="753" width="1" height="1"/><rect x="331" y="739" width="1" height="1"/></g><path d="M327.500 742.500a10.600 10.600 0 0 1 16-1" stroke="#0000c0" stroke-width="1.200" fill="none"/></svg>
<div class="btn" style="left:362px;top:728px;width:48px;height:38px"></div>
<svg class="abs" style="left:370px;top:731px" width="30" height="30" viewBox="0 0 30 30"><defs><linearGradient id="wg" x1="0" y1="0" x2="1" y2="1"><stop offset="0" stop-color="#fff"/><stop offset=".6" stop-color="#dce8f8"/><stop offset="1" stop-color="#88b0e8"/></linearGradient></defs><path d="M1 4q0-3 3-3h24.500v28h-27.500z" fill="url(#wg)" stroke="#2868c0" stroke-width="1.400"/><path d="M3 22l13-5l12 6v5h-25z" fill="#f4f8ff" opacity=".9"/><path d="M19 17l10-3.500v13l-10 3z" fill="#fff" stroke="#b0c0d8" stroke-width=".7"/><path d="M21 20l6-2M21 23l6-2" stroke="#b8c8e0" stroke-width="1"/></svg>
<div class="t" style="left:374px;top:732.18px;font-size:24px;font-weight:bold;color:#1860c0;transform:scaleX(.97) skewX(-3deg);transform-origin:0 50%;">W</div>
<div class="btn" style="left:412px;top:728px;width:48px;height:38px"></div>
<div class="abs" style="left:420px;top:731px;width:32px;height:31px;border-radius:13px;background:radial-gradient(ellipse at 50% 35%,#686868,#404040 70%,#303030)"></div>
<svg class="abs" style="left:420px;top:731px" width="32" height="31" viewBox="0 0 32 31"><path d="M1 15.500h30" stroke="#808080" stroke-width="1"/><path d="M3.500 13v5M6.500 14v3M13.500 12.500v6M17 14v3M20.500 13v5M24 14v3M27.500 12.500v6M30 14v3" stroke="#808080" stroke-width="1"/><path d="M9.800 0v31" stroke="#e03038" stroke-width="1.400"/></svg>
<div class="abs" style="left:462px;top:728px;width:48px;height:38px;background:#fff;border:1px solid;border-color:#404040 #fff #fff #404040;box-shadow:inset 1px 1px 0 #404040,inset -1px -1px 0 #d4d0c8"></div>
<svg class="abs" style="left:472px;top:733px" width="28" height="27" viewBox="0 0 28 27"><defs><linearGradient id="gy" x1="0" y1="0" x2="1" y2="1"><stop offset="0" stop-color="#fff0a0"/><stop offset=".5" stop-color="#f8c020"/><stop offset="1" stop-color="#e8a000"/></linearGradient><linearGradient id="gr" x1="0" y1="0" x2="1" y2="1"><stop offset="0" stop-color="#f8c0b8"/><stop offset=".6" stop-color="#e04838"/><stop offset="1" stop-color="#c81808"/></linearGradient><linearGradient id="gb" x1="0" y1="0" x2="1" y2="1"><stop offset="0" stop-color="#b0d0ff"/><stop offset=".6" stop-color="#5090f0"/><stop offset="1" stop-color="#2058c8"/></linearGradient></defs><rect x=".5" y=".5" width="27" height="26" fill="#fff" stroke="#c0c0c8"/><path d="M.5 19.500h11M5.500 19.500v7M11.500 .5v26" stroke="#c8c8d0" fill="none"/><rect x="12.500" y="1.500" width="14.500" height="14" fill="url(#gy)" stroke="#c08800"/><rect x="1.500" y="8.500" width="9.500" height="10.500" fill="url(#gr)" stroke="#a01008"/><rect x="12.500" y="17.500" width="14.500" height="8.500" fill="url(#gb)" stroke="#6090e0"/></svg>
<div class="t" style="left:1134px;top:739.69px;font-size:11px;letter-spacing:-0.444px;">RU</div>
<div class="abs" style="left:1154px;top:734px;width:2px;height:22px;border-left:1px solid #808080;border-right:1px solid #fff"></div>
<div class="abs" style="left:1158px;top:728px;width:206px;height:38px;border:1px solid;border-color:#808080 #fff #fff #808080"></div>
<svg class="abs" style="left:1164px;top:741px" width="7" height="9" viewBox="0 0 7 9"><path d="M.8 3.800l2.700-2.700l2.700 2.700M.8 7.800l2.700-2.700l2.700 2.700" stroke="#000" stroke-width="1.400" fill="none"/></svg>
<svg class="abs" style="left:1180px;top:738px" width="19" height="18" viewBox="0 0 19 18"><rect x="1.300" y="1.300" width="2.200" height="15.400" rx="1" fill="#fff" stroke="#707070" stroke-width=".9"/><path d="M3.800 2q3-1.500 5.500 0t6 1.500v6.500q-3.500 0-6-1.500t-5.500 0z" fill="#fff" stroke="#909090" stroke-width=".9"/><circle cx="12" cy="12.600" r="4.700" fill="#e02020" stroke="#b00808" stroke-width=".6"/><path d="M10 10.600l4 4M14 10.600l-4 4" stroke="#fff" stroke-width="1.600"/></svg>
<svg class="abs" style="left:1205px;top:740px" width="17" height="14" viewBox="0 0 17 14"><g fill="#fff" stroke="#686868" stroke-width=".9"><rect x=".5" y="9.800" width="3.500" height="2.700"/><rect x="4" y="7" width="3.500" height="5.500"/><rect x="7.500" y="4.500" width="4" height="8"/><rect x="12.200" y="1" width="3.800" height="11.500" fill="#a8a8a8"/></g></svg>
<svg class="abs" style="left:1228px;top:738px" width="17" height="18" viewBox="0 0 17 18"><rect x="1.500" y="2.500" width="10" height="13.500" rx="1.500" fill="#f4f4f4" stroke="#606060" stroke-width="1"/><rect x="3" y="4" width="7" height="10.500" rx=".8" fill="none" stroke="#909090" stroke-width=".8"/><rect x="4.500" y="1" width="4" height="2" fill="#fff" stroke="#606060" stroke-width=".8"/><path d="M9.500 1v4M13.500 1v4" stroke="#484848" stroke-width="1.500"/><path d="M7.300 4.800h8.400v3q0 2.800-3 3.200v5.500h-2.400v-5.500q-3-.4-3-3.200z" fill="#fff" stroke="#505050" stroke-width="1"/></svg>
<svg class="abs" style="left:1252px;top:738px" width="17" height="18" viewBox="0 0 17 18"><path d="M1.500 6.500h3l4-4.500v14l-4-4.500h-3z" fill="#f0f0f0" stroke="#707070" stroke-width="1.100"/><path d="M10.500 6q1.500 3 0 6M12.500 3.500q3 5.500 0 11" stroke="#808080" stroke-width="1.300" fill="none"/></svg>
<div class="t" style="left:1281px;top:733.69px;font-size:11px;letter-spacing:-0.102px;width:60px;text-align:center;">1:59</div>
<div class="t" style="left:1281px;top:749.69px;font-size:11px;letter-spacing:-0.005px;width:60px;text-align:center;">27.02.2020</div>
<svg class="abs" style="left:1346px;top:741px" width="16" height="13" viewBox="0 0 16 13"><rect x=".5" y=".5" width="15" height="12" fill="#3068d0" stroke="#a8b8d0"/><path d="M1 1h14v5q-6 0-14 4z" fill="#5890f0"/><rect x="1" y="9" width="14" height="2.500" fill="#182840"/><circle cx="3" cy="10.300" r="1.300" fill="#f0a020"/></svg>
</body></html>
